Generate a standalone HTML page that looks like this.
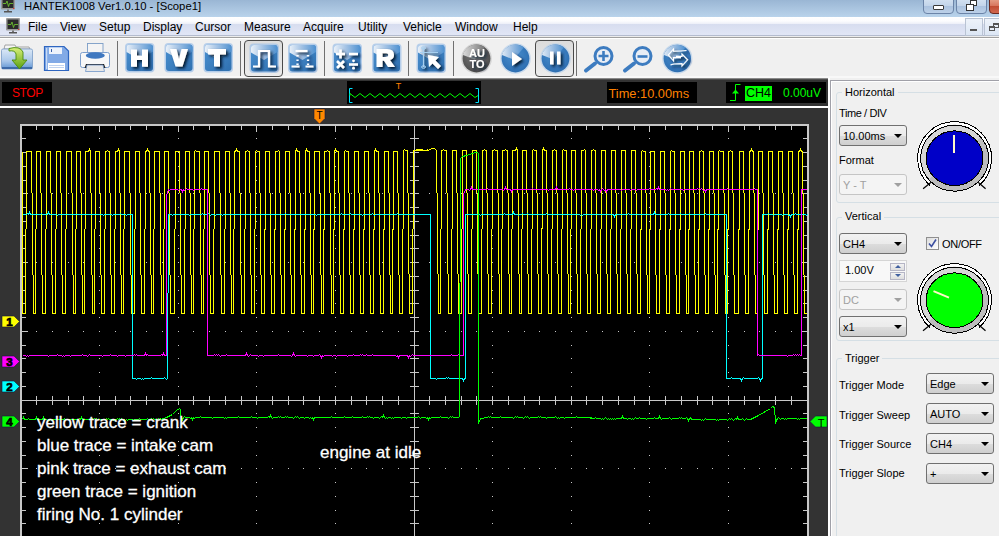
<!DOCTYPE html>
<html><head><meta charset="utf-8">
<style>
*{margin:0;padding:0;box-sizing:border-box}
html,body{width:999px;height:536px;overflow:hidden;background:#f0f0f0;font-family:"Liberation Sans",sans-serif;font-size:12px;color:#000}
.a{position:absolute}
#title{left:0;top:0;width:999px;height:17px;background:linear-gradient(#9ab6d4,#b9d3eb)}
#menu{left:0;top:17px;width:999px;height:18px;background:linear-gradient(#ffffff 0px,#fcfcfe 4px,#eceff8 7px,#d7ddef 7px,#e1e6f6 18px)}
#menuline{left:0;top:35px;width:999px;height:4px;background:linear-gradient(#b4bccf 0px,#b4bccf 1px,#ececec 1px,#ececec 2px,#a0a0a0 2px,#a0a0a0 3px,#fff 3px)}
#tb{left:0;top:39px;width:999px;height:39px;background:linear-gradient(#f0f0f0 37px,#f8f8f8 37px)}
.mi{top:20px;font-size:12px;color:#000;white-space:nowrap;line-height:14px}
#status{left:0;top:78px;width:828px;height:28px;background:linear-gradient(#8a8a8a 0px,#8a8a8a 1px,#4c4c4c 1px,#4c4c4c 2px,#333 2px)}
#wline{left:0;top:106px;width:828px;height:2px;background:#fff}
#scope{left:0;top:108px;width:828px;height:428px;background:#333}
#panel{left:830px;top:80px;width:169px;height:456px;background:#f0f0f0;border-left:1px solid #a0a0a0;border-top:1px solid #a0a0a0}
.lbl{font-size:11px;white-space:nowrap;line-height:12px;color:#000}
.gb{border:1px solid #d5dfe5;border-radius:3px}
.gbt{background:#f0f0f0;padding:0 3px;font-size:11px;line-height:12px}
.cb{width:68px;height:21px;border:1px solid #707070;border-radius:3px;background:linear-gradient(#f2f2f2 0%,#ebebeb 50%,#dddddd 51%,#cfcfcf 100%)}
.cb span{position:absolute;left:3px;top:4px;font-size:11px;line-height:12px}
.cb i{position:absolute;right:4px;top:8px;width:0;height:0;border-left:4px solid transparent;border-right:4px solid transparent;border-top:4px solid #000}
.cbd{border-color:#c5c5c5;background:#f4f4f4}
.cbd span{color:#a0a0a0}
.cbd i{border-top-color:#a0a0a0}
</style></head><body>
<div id="title" class="a"></div>
<div id="menu" class="a"></div>
<div id="menuline" class="a"></div>
<div id="tb" class="a"></div>
<div id="status" class="a"></div>
<div id="wline" class="a"></div>
<div id="scope" class="a"></div>
<div id="panel" class="a"></div>

<!-- title text -->
<div class="a" style="left:24px;top:0px;font-size:11.3px;line-height:13px;color:#000;white-space:nowrap">HANTEK1008 Ver1.0.10 - [Scope1]</div>
<!--ICONS--><svg class="a" style="left:0;top:0" width="30" height="40">
<g><rect x="1" y="-3" width="14" height="12.5" rx="1" fill="#9a9a9a"/><rect x="2.5" y="-2" width="11" height="10" fill="#2a2a2a"/><path d="M3 3.5 H6 L7 1 L8.5 6.5 L9.5 3.5 H13" fill="none" stroke="#6cc030" stroke-width="0.9"/><rect x="13" y="8" width="1.2" height="1" fill="#e03030"/><rect x="7" y="9.5" width="2" height="1.5" fill="#777"/><rect x="4" y="11" width="8" height="1.5" fill="#555"/></g>
<g><rect x="6" y="18" width="14" height="12.5" rx="1" fill="#9a9a9a"/><rect x="7.5" y="19.5" width="11" height="9.5" fill="#2a2a2a"/><path d="M8 24.5 H11 L12 22 L13.5 27.5 L14.5 24.5 H18" fill="none" stroke="#6cc030" stroke-width="0.9"/><rect x="18" y="29" width="1.2" height="1" fill="#e03030"/><rect x="12" y="30.5" width="2" height="1.5" fill="#777"/><rect x="9" y="32" width="8" height="1.5" fill="#555"/></g>
</svg>
<!-- window buttons -->
<div class="a" style="left:923px;top:-3px;width:31px;height:17px;border:1px solid #6b84a8;border-radius:0 0 4px 4px;background:linear-gradient(#d6e3f2 0%,#c3d5ea 50%,#a9c1de 51%,#bcd0e8 100%)"></div>
<div class="a" style="left:933px;top:5px;width:11px;height:5px;border:1px solid #3a3a3a;border-radius:1px;background:#fff"></div>
<div class="a" style="left:956px;top:-3px;width:31px;height:17px;border:1px solid #6b84a8;border-radius:0 0 4px 4px;background:linear-gradient(#d6e3f2 0%,#c3d5ea 50%,#a9c1de 51%,#bcd0e8 100%)"></div>
<div class="a" style="left:970px;top:0px;width:7px;height:6px;border:1.5px solid #333;background:#fff"></div>
<div class="a" style="left:966px;top:4px;width:8px;height:7px;border:1.5px solid #333;background:#fff"></div>
<div class="a" style="left:989px;top:-3px;width:20px;height:17px;border:1px solid #6a2a20;border-radius:0 0 4px 4px;background:linear-gradient(#e8a890 0%,#d87860 50%,#c04a30 51%,#d06850 100%)"></div>
<!-- MDI buttons -->
<div class="a" style="left:965px;top:18px;width:18px;height:18px;border:1px solid #b9c3d3;background:linear-gradient(#eef3fa,#dce6f4)"></div>
<div class="a" style="left:970px;top:29px;width:7px;height:2px;background:#555"></div>
<div class="a" style="left:984px;top:18px;width:18px;height:18px;border:1px solid #b9c3d3;background:linear-gradient(#eef3fa,#dce6f4)"></div>
<div class="a" style="left:993px;top:23px;width:6px;height:5px;border:1.2px solid #555;border-top-width:2px"></div>
<div class="a" style="left:989px;top:26px;width:6px;height:5px;border:1.2px solid #555;border-top-width:2px;background:#e6ecf6"></div>
<!--/ICONS-->
<!-- menu items -->
<div class="a mi" style="left:28px">File</div>
<div class="a mi" style="left:60px">View</div>
<div class="a mi" style="left:99px">Setup</div>
<div class="a mi" style="left:143px">Display</div>
<div class="a mi" style="left:195px">Cursor</div>
<div class="a mi" style="left:244px">Measure</div>
<div class="a mi" style="left:303px">Acquire</div>
<div class="a mi" style="left:358px">Utility</div>
<div class="a mi" style="left:403px">Vehicle</div>
<div class="a mi" style="left:455px">Window</div>
<div class="a mi" style="left:513px">Help</div>

<svg class="a" style="left:0;top:0" width="999" height="80"><defs>
<linearGradient id="tmain" x1="0" y1="0" x2="1" y2="1"><stop offset="0" stop-color="#4a90d0"/><stop offset="1" stop-color="#2f70b0"/></linearGradient>
<linearGradient id="thl" x1="0" y1="0" x2="1" y2="0"><stop offset="0" stop-color="#f2f6fb"/><stop offset="0.45" stop-color="#a9c6e6"/><stop offset="1" stop-color="#4f92d2"/></linearGradient>
<radialGradient id="cmain" cx="0.45" cy="0.4" r="0.6"><stop offset="0" stop-color="#4a90d0"/><stop offset="1" stop-color="#2e6fb2"/></radialGradient>
<radialGradient id="gmain" cx="0.45" cy="0.4" r="0.6"><stop offset="0" stop-color="#7a7a7a"/><stop offset="1" stop-color="#4e4e4e"/></radialGradient>
<linearGradient id="ghl" x1="0" y1="0" x2="1" y2="0"><stop offset="0" stop-color="#e8e8e8"/><stop offset="1" stop-color="#7a7a7a"/></linearGradient>
<linearGradient id="fold" x1="0" y1="0" x2="0" y2="1"><stop offset="0" stop-color="#dbe8f6"/><stop offset="0.6" stop-color="#a9c7ea"/><stop offset="1" stop-color="#5e93d2"/></linearGradient>
<linearGradient id="arr" x1="0" y1="0" x2="0" y2="1"><stop offset="0" stop-color="#d9f07a"/><stop offset="1" stop-color="#5aa010"/></linearGradient>
<linearGradient id="press" x1="0" y1="0" x2="0" y2="1"><stop offset="0" stop-color="#dcdcdc"/><stop offset="1" stop-color="#ececec"/></linearGradient>
<filter id="sh" x="-30%" y="-30%" width="170%" height="170%"><feGaussianBlur in="SourceAlpha" stdDeviation="1.4"/><feOffset dx="2" dy="2.2" result="b"/><feFlood flood-color="#041830" flood-opacity="1"/><feComposite in2="b" operator="in"/><feMerge><feMergeNode/><feMergeNode in="SourceGraphic"/></feMerge></filter>
</defs><g><path d="M4 49 L5 45 H15 L16 47 H29 L30 49 Z" fill="#f4f4f4" stroke="#909090" stroke-width="0.8"/><rect x="1.5" y="49" width="31" height="20" rx="1.5" fill="url(#fold)" stroke="#7a9cc6" stroke-width="0.8"/><rect x="2" y="67" width="30" height="2" fill="#3d6aa8"/><path d="M9 48.5 Q20 45.5 23 52 V60 H27 L19.5 69 L12 60 H16 V54 Q15 50 9 51 Z" fill="url(#arr)" stroke="#4a8a10" stroke-width="0.9"/></g><g><path d="M44.5 46.5 H64 L68.5 51 V70.5 H44.5 Z" fill="#82aae6" stroke="#2f66c0" stroke-width="1.2"/><rect x="49" y="47.5" width="13" height="6.5" fill="#eef3fb"/><rect x="51" y="49" width="1" height="3" fill="#3a5fa8"/><rect x="48" y="63" width="17" height="7" fill="#fff"/><path d="M49 65.5 H64 M49 67.5 H64" stroke="#b0c8ec" stroke-width="0.8"/><rect x="46" y="48" width="1.2" height="21" fill="#c9dbf5"/></g><g><rect x="87.5" y="43.5" width="15.5" height="10" fill="#f4f4f4" stroke="#7a9cc6" stroke-width="0.9"/><rect x="80.5" y="52.5" width="29" height="15" rx="2" fill="#f8f8f8" stroke="#6f95c8" stroke-width="0.9"/><ellipse cx="95.3" cy="55.5" rx="9.5" ry="3.2" fill="#3f78c0"/><path d="M86 64 H104 L105.5 68 H84.5 Z" fill="#222"/><path d="M87 65 H103 L104.5 71.5 H85.5 Z" fill="#e8e8e8" stroke="#6f95c8" stroke-width="0.8"/></g><rect x="117" y="41" width="1" height="35" fill="#707070"/><rect x="240" y="41" width="1" height="35" fill="#707070"/><rect x="324" y="41" width="1" height="35" fill="#707070"/><rect x="408" y="41" width="1" height="35" fill="#707070"/><rect x="453" y="41" width="1" height="35" fill="#707070"/><rect x="576" y="41" width="1" height="35" fill="#707070"/><rect x="244.5" y="40.5" width="38.0" height="36" rx="3.5" fill="url(#press)" stroke="#4a4a4a" stroke-width="1"/><rect x="535.5" y="40.5" width="38.0" height="36" rx="3.5" fill="url(#press)" stroke="#4a4a4a" stroke-width="1"/><g transform="translate(124.5,42.5)"><rect x="0.5" y="0.5" width="29.5" height="29.5" rx="4" fill="#a8c6e8" opacity="0.8"/><rect x="2" y="2" width="26.5" height="26.5" rx="3" fill="url(#tmain)"/><path d="M2 5 Q2 2 5 2 H25.5 Q28.5 2 28.5 5 V9 L15 17 L2 9.5 Z" fill="url(#thl)" opacity="0.95"/><g filter="url(#sh)"><path d="M6.5 7 H12.5 V13.3 H17.5 V7 H23.5 V24.3 H17.5 V17.6 H12.5 V24.3 H6.5 Z" fill="#fff"/></g></g><g transform="translate(164,42.5)"><rect x="0.5" y="0.5" width="29.5" height="29.5" rx="4" fill="#a8c6e8" opacity="0.8"/><rect x="2" y="2" width="26.5" height="26.5" rx="3" fill="url(#tmain)"/><path d="M2 5 Q2 2 5 2 H25.5 Q28.5 2 28.5 5 V9 L15 17 L2 9.5 Z" fill="url(#thl)" opacity="0.95"/><g filter="url(#sh)"><path d="M6 6.5 H12.5 L15 16.5 L17.5 6.5 H24 L18.5 24 H11.5 Z" fill="#fff"/></g></g><g transform="translate(203,42.5)"><rect x="0.5" y="0.5" width="29.5" height="29.5" rx="4" fill="#a8c6e8" opacity="0.8"/><rect x="2" y="2" width="26.5" height="26.5" rx="3" fill="url(#tmain)"/><path d="M2 5 Q2 2 5 2 H25.5 Q28.5 2 28.5 5 V9 L15 17 L2 9.5 Z" fill="url(#thl)" opacity="0.95"/><g filter="url(#sh)"><path d="M5 6.5 H23 V12 H17 V24 H11 V12 H5 Z" fill="#fff"/></g></g><g transform="translate(249,43)"><rect x="0.5" y="0.5" width="29.5" height="29.5" rx="4" fill="#a8c6e8" opacity="0.8"/><rect x="2" y="2" width="26.5" height="26.5" rx="3" fill="url(#tmain)"/><path d="M2 5 Q2 2 5 2 H25.5 Q28.5 2 28.5 5 V9 L15 17 L2 9.5 Z" fill="url(#thl)" opacity="0.95"/><g filter="url(#sh)"><path d="M4 23.5 H10 V8 H20 V23.5 H27" fill="none" stroke="#fff" stroke-width="2.2"/></g></g><g transform="translate(287.5,43)"><rect x="0.5" y="0.5" width="29.5" height="29.5" rx="4" fill="#a8c6e8" opacity="0.8"/><rect x="2" y="2" width="26.5" height="26.5" rx="3" fill="url(#tmain)"/><path d="M2 5 Q2 2 5 2 H25.5 Q28.5 2 28.5 5 V9 L15 17 L2 9.5 Z" fill="url(#thl)" opacity="0.95"/><g filter="url(#sh)"><path d="M8 8 H20" stroke="#fff" stroke-width="2.2"/><path d="M10 12 V13.5 M10 16.5 V18 M10 20.5 V22 M20.5 12 V13.5 M20.5 16.5 V18 M20.5 20.5 V22" stroke="#fff" stroke-width="2.2"/><path d="M4 23.5 H12 M18 23.5 H26" stroke="#fff" stroke-width="2.2"/></g></g><g transform="translate(332,43)"><rect x="0.5" y="0.5" width="29.5" height="29.5" rx="4" fill="#a8c6e8" opacity="0.8"/><rect x="2" y="2" width="26.5" height="26.5" rx="3" fill="url(#tmain)"/><path d="M2 5 Q2 2 5 2 H25.5 Q28.5 2 28.5 5 V9 L15 17 L2 9.5 Z" fill="url(#thl)" opacity="0.95"/><g filter="url(#sh)"><path d="M4 11 H13 M8.5 6.5 V15.5 M17 11 H26" stroke="#fff" stroke-width="2.6"/><path d="M5 18 L12 25 M12 18 L5 25 M17 21.5 H26" stroke="#fff" stroke-width="2.6"/><circle cx="21.5" cy="17.8" r="1.4" fill="#fff"/><circle cx="21.5" cy="25.2" r="1.4" fill="#fff"/></g></g><g transform="translate(371.5,43)"><rect x="0.5" y="0.5" width="29.5" height="29.5" rx="4" fill="#a8c6e8" opacity="0.8"/><rect x="2" y="2" width="26.5" height="26.5" rx="3" fill="url(#tmain)"/><path d="M2 5 Q2 2 5 2 H25.5 Q28.5 2 28.5 5 V9 L15 17 L2 9.5 Z" fill="url(#thl)" opacity="0.95"/><g filter="url(#sh)"><path fill-rule="evenodd" d="M5 6 H15.5 Q22.5 6 22.5 12 Q22.5 16 18.5 17 L23.5 24 H16.5 L12.5 17.8 H11 V24 H5 Z M11 10.3 H14.8 Q16.8 10.3 16.8 12.1 Q16.8 14 14.8 14 H11 Z" fill="#fff"/></g></g><g transform="translate(416,43)"><rect x="0.5" y="0.5" width="29.5" height="29.5" rx="4" fill="#a8c6e8" opacity="0.8"/><rect x="2" y="2" width="26.5" height="26.5" rx="3" fill="url(#tmain)"/><path d="M2 5 Q2 2 5 2 H25.5 Q28.5 2 28.5 5 V9 L15 17 L2 9.5 Z" fill="url(#thl)" opacity="0.95"/><g filter="url(#sh)"><path d="M7.5 5 V24 M4 9.5 H22" stroke="#a8d0f0" stroke-width="1.2" fill="none"/><ellipse cx="7.5" cy="5" rx="2" ry="1.2" fill="none" stroke="#a8d0f0"/><ellipse cx="7.5" cy="24" rx="2" ry="1.2" fill="none" stroke="#a8d0f0"/><path d="M12 12 L23 14 L19.5 17.5 L25 23 L22 26 L16.5 20.5 L13 24 Z" fill="#fff"/></g></g><circle cx="476.5" cy="58.5" r="15.3" fill="#c8c8c8" opacity="0.7"/><circle cx="476.5" cy="58.5" r="13.9" fill="url(#gmain)"/><path d="M463.02 55.02 A13.9 13.9 0 0 1 484.84 47.38 L474.5 59.5 Z" fill="url(#ghl)" opacity="0.9"/><g filter="url(#sh)"><text x="477" y="57" font-family="Liberation Sans" font-weight="bold" font-size="11" fill="#fff" text-anchor="middle">AU</text><text x="477" y="67.5" font-family="Liberation Sans" font-weight="bold" font-size="11" fill="#fff" text-anchor="middle">TO</text></g><circle cx="515.5" cy="58.5" r="15.3" fill="#b8d0ea" opacity="0.7"/><circle cx="515.5" cy="58.5" r="13.9" fill="url(#cmain)"/><path d="M502.02 55.02 A13.9 13.9 0 0 1 523.84 47.38 L513.5 59.5 Z" fill="url(#thl)" opacity="0.9"/><g filter="url(#sh)"><path d="M512 52 L522 59 L512 66 Z" fill="#fff"/></g><circle cx="555.5" cy="58.5" r="15.3" fill="#b8d0ea" opacity="0.7"/><circle cx="555.5" cy="58.5" r="13.9" fill="url(#cmain)"/><path d="M542.02 55.02 A13.9 13.9 0 0 1 563.84 47.38 L553.5 59.5 Z" fill="url(#thl)" opacity="0.9"/><g filter="url(#sh)"><rect x="550" y="51.5" width="3.5" height="13" fill="#fff"/><rect x="557" y="51.5" width="3.5" height="13" fill="#fff"/></g><path d="M586.0 70.5 L595.0 63.5" stroke="#3d7cc0" stroke-width="4" stroke-linecap="round"/><circle cx="603.5" cy="56" r="8.5" fill="#e9eef5" stroke="#3d7cc0" stroke-width="3"/><path d="M598.5 56 H608.5 M603.5 51 V61" stroke="#3d7cc0" stroke-width="2.6"/><path d="M625.0 70.5 L634.0 63.5" stroke="#3d7cc0" stroke-width="4" stroke-linecap="round"/><circle cx="642.5" cy="56" r="8.5" fill="#e9eef5" stroke="#3d7cc0" stroke-width="3"/><path d="M637.5 56.5 H647.5" stroke="#3d7cc0" stroke-width="2.6"/><circle cx="677.3" cy="58.5" r="15.100000000000001" fill="#b8d0ea" opacity="0.7"/><circle cx="677.3" cy="58.5" r="13.700000000000001" fill="url(#cmain)"/><path d="M664.01 55.08 A13.700000000000001 13.700000000000001 0 0 1 685.52 47.54 L675.3 59.5 Z" fill="url(#thl)" opacity="0.9"/><g filter="url(#sh)"><path d="M686.5 50.5 Q681 51.2 673.5 51.2 V49 L668.3 55 L673.5 60.8 V57.6 H681" fill="none" stroke="#fff" stroke-width="1.1"/><path d="M670.5 65.2 Q672 63.6 682 63.6 V65.8 L687.6 59.8 L682 54 V56.4 H676" fill="none" stroke="#fff" stroke-width="1.1"/></g></svg>
<!-- status boxes -->
<div class="a" style="left:2px;top:82px;width:50px;height:21px;background:#000"></div>
<div class="a" style="left:12px;top:87px;font-size:12px;line-height:12px;letter-spacing:-0.4px;color:#ff0000">STOP</div>
<div class="a" style="left:347px;top:81px;width:134px;height:23px;background:#000"></div>
<div class="a" style="left:607px;top:82px;width:90px;height:21px;background:#000"></div>
<div class="a" style="left:608.5px;top:87px;font-size:12.8px;line-height:13px;color:#ff8000;white-space:nowrap">Time:10.00ms</div>
<div class="a" style="left:726px;top:82px;width:100px;height:21px;background:#000"></div>
<div class="a" style="left:745px;top:86px;width:27px;height:15px;background:#00ff00"></div>
<div class="a" style="left:746px;top:87px;font-size:12.5px;line-height:13px;color:#000">CH4</div>
<div class="a" style="left:783px;top:87px;font-size:12px;line-height:13px;color:#00ff00">0.00uV</div>


<!-- right panel -->
<div class="a" style="left:828px;top:78px;width:2px;height:458px;background:#fff"></div>
<div class="a" style="left:830px;top:80px;width:169px;height:456px;background:#f0f0f0;border-left:1px solid #a0a0a8;border-top:1px solid #a0a0a8;box-shadow:inset 1px 1px 0 #fff"></div>
<!-- Horizontal group -->
<div class="a gb" style="left:836px;top:92px;width:170px;height:111px"></div>
<div class="a gbt" style="left:842px;top:86px">Horizontal</div>
<div class="a lbl" style="left:839px;top:107px;letter-spacing:-0.4px">Time / DIV</div>
<div class="a cb" style="left:839px;top:125px"><span>10.00ms</span><i></i></div>
<div class="a lbl" style="left:839px;top:154px">Format</div>
<div class="a cb cbd" style="left:839px;top:174px"><span>Y - T</span><i></i></div>
<!-- Vertical group -->
<div class="a gb" style="left:836px;top:217px;width:170px;height:124px"></div>
<div class="a gbt" style="left:842px;top:210px">Vertical</div>
<div class="a cb" style="left:839px;top:233px"><span>CH4</span><i></i></div>
<div class="a" style="left:839px;top:260px;width:68px;height:22px;border:1px solid #d5d5d5;background:#f8f8f8"></div>
<div class="a lbl" style="left:845px;top:264px">1.00V</div>
<div class="a" style="left:890px;top:263px;width:15px;height:8px;border:1px solid #b5b5c5;background:linear-gradient(#f2f2f2,#dedede)"></div>
<div class="a" style="left:890px;top:272px;width:15px;height:8px;border:1px solid #b5b5c5;background:linear-gradient(#f2f2f2,#dedede)"></div>
<div class="a" style="left:894.5px;top:265px;width:0;height:0;border-left:3px solid transparent;border-right:3px solid transparent;border-bottom:3px solid #4060a0"></div>
<div class="a" style="left:894.5px;top:274px;width:0;height:0;border-left:3px solid transparent;border-right:3px solid transparent;border-top:3px solid #4060a0"></div>
<div class="a cb cbd" style="left:839px;top:289px"><span>DC</span><i></i></div>
<div class="a cb" style="left:839px;top:316px"><span>x1</span><i></i></div>
<div class="a" style="left:926px;top:237px;width:13px;height:13px;border:1px solid #8f8f8f;background:linear-gradient(135deg,#dcdcdc,#fff)"></div>
<svg class="a" style="left:926px;top:237px" width="13" height="13"><path d="M3 6.5 L5.5 9.5 L10 2.5" fill="none" stroke="#3c4fa0" stroke-width="1.6"/></svg>
<div class="a lbl" style="left:942px;top:238px;letter-spacing:-0.3px">ON/OFF</div>
<!-- Trigger group -->
<div class="a gb" style="left:836px;top:358px;width:170px;height:200px"></div>
<div class="a gbt" style="left:842px;top:352px">Trigger</div>
<div class="a lbl" style="left:839px;top:379px">Trigger Mode</div>
<div class="a cb" style="left:926px;top:373px"><span>Edge</span><i></i></div>
<div class="a lbl" style="left:839px;top:409px">Trigger Sweep</div>
<div class="a cb" style="left:926px;top:403px"><span>AUTO</span><i></i></div>
<div class="a lbl" style="left:839px;top:438px">Trigger Source</div>
<div class="a cb" style="left:926px;top:433px"><span>CH4</span><i></i></div>
<div class="a lbl" style="left:839px;top:467px">Trigger Slope</div>
<div class="a cb" style="left:926px;top:463px"><span>+</span><i></i></div>
<!--K1--><svg class="a" style="left:0;top:0" width="999" height="536"><g shape-rendering="crispEdges"><path d="M930.78 184.21 A35.6 35.0 0 1 1 978.42 184.21" fill="none" stroke="#fff" stroke-width="2.4"/><path d="M929.84 185.40 A37.0 36.6 0 1 1 979.36 185.40" fill="none" stroke="#000" stroke-width="1.0"/><ellipse cx="954.6" cy="158.2" rx="34" ry="33" fill="#bdbdbd" stroke="#000" stroke-width="1"/><path d="M954.6 158.2 L929.01 179.03 A33.4 32.4 0 0 1 980.19 137.37 Z" fill="#d6d6d6"/><ellipse cx="954.6" cy="158.2" rx="28.4" ry="27.3" fill="#0000c8" stroke="#000" stroke-width="1"/></g><path d="M923.1 188.7 L931.1 182.2" stroke="#000" stroke-width="1.2"/><path d="M985.6 188.7 L978.1 182.2" stroke="#000" stroke-width="1.2"/><rect x="953" y="135" width="2" height="18" fill="#fff8c8"/><g shape-rendering="crispEdges"><path d="M930.68 326.21 A35.6 35.0 0 1 1 978.32 326.21" fill="none" stroke="#fff" stroke-width="2.4"/><path d="M929.74 327.40 A37.0 36.6 0 1 1 979.26 327.40" fill="none" stroke="#000" stroke-width="1.0"/><ellipse cx="954.5" cy="300.2" rx="34" ry="33" fill="#bdbdbd" stroke="#000" stroke-width="1"/><path d="M954.5 300.2 L928.91 321.03 A33.4 32.4 0 0 1 980.09 279.37 Z" fill="#d6d6d6"/><ellipse cx="954.5" cy="300.2" rx="28.4" ry="27.3" fill="#00ff00" stroke="#000" stroke-width="1"/></g><path d="M923.0 330.7 L931.0 324.2" stroke="#000" stroke-width="1.2"/><path d="M985.5 330.7 L978.0 324.2" stroke="#000" stroke-width="1.2"/><path d="M933.5 291.2 L949 297.6" stroke="#fff8c8" stroke-width="2"/></svg><!--K2-->
<svg class="a" style="left:0;top:0" width="999" height="536" viewBox="0 0 999 536"><g shape-rendering="crispEdges"><rect x="22" y="126" width="785" height="410" fill="#000"/><rect x="20" y="124" width="789" height="2" fill="#c8c8c8"/><rect x="20" y="124" width="2" height="412" fill="#c8c8c8"/><rect x="807" y="124" width="2" height="412" fill="#c8c8c8"/><rect x="36" y="126" width="1" height="4" fill="#c8c8c8"/><rect x="52" y="126" width="1" height="4" fill="#c8c8c8"/><rect x="68" y="126" width="1" height="4" fill="#c8c8c8"/><rect x="83" y="126" width="1" height="4" fill="#c8c8c8"/><rect x="99" y="126" width="1" height="6" fill="#c8c8c8"/><rect x="115" y="126" width="1" height="4" fill="#c8c8c8"/><rect x="130" y="126" width="1" height="4" fill="#c8c8c8"/><rect x="146" y="126" width="1" height="4" fill="#c8c8c8"/><rect x="162" y="126" width="1" height="4" fill="#c8c8c8"/><rect x="178" y="126" width="1" height="6" fill="#c8c8c8"/><rect x="193" y="126" width="1" height="4" fill="#c8c8c8"/><rect x="209" y="126" width="1" height="4" fill="#c8c8c8"/><rect x="225" y="126" width="1" height="4" fill="#c8c8c8"/><rect x="241" y="126" width="1" height="4" fill="#c8c8c8"/><rect x="256" y="126" width="1" height="6" fill="#c8c8c8"/><rect x="272" y="126" width="1" height="4" fill="#c8c8c8"/><rect x="288" y="126" width="1" height="4" fill="#c8c8c8"/><rect x="303" y="126" width="1" height="4" fill="#c8c8c8"/><rect x="319" y="126" width="1" height="4" fill="#c8c8c8"/><rect x="335" y="126" width="1" height="6" fill="#c8c8c8"/><rect x="351" y="126" width="1" height="4" fill="#c8c8c8"/><rect x="366" y="126" width="1" height="4" fill="#c8c8c8"/><rect x="382" y="126" width="1" height="4" fill="#c8c8c8"/><rect x="398" y="126" width="1" height="4" fill="#c8c8c8"/><rect x="414" y="126" width="1" height="6" fill="#c8c8c8"/><rect x="429" y="126" width="1" height="4" fill="#c8c8c8"/><rect x="445" y="126" width="1" height="4" fill="#c8c8c8"/><rect x="461" y="126" width="1" height="4" fill="#c8c8c8"/><rect x="476" y="126" width="1" height="4" fill="#c8c8c8"/><rect x="492" y="126" width="1" height="6" fill="#c8c8c8"/><rect x="508" y="126" width="1" height="4" fill="#c8c8c8"/><rect x="524" y="126" width="1" height="4" fill="#c8c8c8"/><rect x="539" y="126" width="1" height="4" fill="#c8c8c8"/><rect x="555" y="126" width="1" height="4" fill="#c8c8c8"/><rect x="571" y="126" width="1" height="6" fill="#c8c8c8"/><rect x="586" y="126" width="1" height="4" fill="#c8c8c8"/><rect x="602" y="126" width="1" height="4" fill="#c8c8c8"/><rect x="618" y="126" width="1" height="4" fill="#c8c8c8"/><rect x="634" y="126" width="1" height="4" fill="#c8c8c8"/><rect x="649" y="126" width="1" height="6" fill="#c8c8c8"/><rect x="665" y="126" width="1" height="4" fill="#c8c8c8"/><rect x="681" y="126" width="1" height="4" fill="#c8c8c8"/><rect x="697" y="126" width="1" height="4" fill="#c8c8c8"/><rect x="712" y="126" width="1" height="4" fill="#c8c8c8"/><rect x="728" y="126" width="1" height="6" fill="#c8c8c8"/><rect x="744" y="126" width="1" height="4" fill="#c8c8c8"/><rect x="759" y="126" width="1" height="4" fill="#c8c8c8"/><rect x="775" y="126" width="1" height="4" fill="#c8c8c8"/><rect x="791" y="126" width="1" height="4" fill="#c8c8c8"/><rect x="22" y="138" width="4" height="1" fill="#c8c8c8"/><rect x="803" y="138" width="4" height="1" fill="#c8c8c8"/><rect x="22" y="152" width="4" height="1" fill="#c8c8c8"/><rect x="803" y="152" width="4" height="1" fill="#c8c8c8"/><rect x="22" y="166" width="4" height="1" fill="#c8c8c8"/><rect x="803" y="166" width="4" height="1" fill="#c8c8c8"/><rect x="22" y="180" width="4" height="1" fill="#c8c8c8"/><rect x="803" y="180" width="4" height="1" fill="#c8c8c8"/><rect x="22" y="193" width="6" height="1" fill="#c8c8c8"/><rect x="801" y="193" width="6" height="1" fill="#c8c8c8"/><rect x="22" y="207" width="4" height="1" fill="#c8c8c8"/><rect x="803" y="207" width="4" height="1" fill="#c8c8c8"/><rect x="22" y="221" width="4" height="1" fill="#c8c8c8"/><rect x="803" y="221" width="4" height="1" fill="#c8c8c8"/><rect x="22" y="235" width="4" height="1" fill="#c8c8c8"/><rect x="803" y="235" width="4" height="1" fill="#c8c8c8"/><rect x="22" y="248" width="4" height="1" fill="#c8c8c8"/><rect x="803" y="248" width="4" height="1" fill="#c8c8c8"/><rect x="22" y="262" width="6" height="1" fill="#c8c8c8"/><rect x="801" y="262" width="6" height="1" fill="#c8c8c8"/><rect x="22" y="276" width="4" height="1" fill="#c8c8c8"/><rect x="803" y="276" width="4" height="1" fill="#c8c8c8"/><rect x="22" y="290" width="4" height="1" fill="#c8c8c8"/><rect x="803" y="290" width="4" height="1" fill="#c8c8c8"/><rect x="22" y="303" width="4" height="1" fill="#c8c8c8"/><rect x="803" y="303" width="4" height="1" fill="#c8c8c8"/><rect x="22" y="317" width="4" height="1" fill="#c8c8c8"/><rect x="803" y="317" width="4" height="1" fill="#c8c8c8"/><rect x="22" y="331" width="6" height="1" fill="#c8c8c8"/><rect x="801" y="331" width="6" height="1" fill="#c8c8c8"/><rect x="22" y="345" width="4" height="1" fill="#c8c8c8"/><rect x="803" y="345" width="4" height="1" fill="#c8c8c8"/><rect x="22" y="358" width="4" height="1" fill="#c8c8c8"/><rect x="803" y="358" width="4" height="1" fill="#c8c8c8"/><rect x="22" y="372" width="4" height="1" fill="#c8c8c8"/><rect x="803" y="372" width="4" height="1" fill="#c8c8c8"/><rect x="22" y="386" width="4" height="1" fill="#c8c8c8"/><rect x="803" y="386" width="4" height="1" fill="#c8c8c8"/><rect x="22" y="400" width="6" height="1" fill="#c8c8c8"/><rect x="801" y="400" width="6" height="1" fill="#c8c8c8"/><rect x="22" y="413" width="4" height="1" fill="#c8c8c8"/><rect x="803" y="413" width="4" height="1" fill="#c8c8c8"/><rect x="22" y="427" width="4" height="1" fill="#c8c8c8"/><rect x="803" y="427" width="4" height="1" fill="#c8c8c8"/><rect x="22" y="441" width="4" height="1" fill="#c8c8c8"/><rect x="803" y="441" width="4" height="1" fill="#c8c8c8"/><rect x="22" y="455" width="4" height="1" fill="#c8c8c8"/><rect x="803" y="455" width="4" height="1" fill="#c8c8c8"/><rect x="22" y="468" width="6" height="1" fill="#c8c8c8"/><rect x="801" y="468" width="6" height="1" fill="#c8c8c8"/><rect x="22" y="482" width="4" height="1" fill="#c8c8c8"/><rect x="803" y="482" width="4" height="1" fill="#c8c8c8"/><rect x="22" y="496" width="4" height="1" fill="#c8c8c8"/><rect x="803" y="496" width="4" height="1" fill="#c8c8c8"/><rect x="22" y="510" width="4" height="1" fill="#c8c8c8"/><rect x="803" y="510" width="4" height="1" fill="#c8c8c8"/><rect x="22" y="523" width="4" height="1" fill="#c8c8c8"/><rect x="803" y="523" width="4" height="1" fill="#c8c8c8"/><rect x="414" y="126" width="1" height="410" fill="#c8c8c8"/><rect x="22" y="400" width="785" height="1" fill="#c8c8c8"/><rect x="36" y="396" width="1" height="9" fill="#c8c8c8"/><rect x="52" y="396" width="1" height="9" fill="#c8c8c8"/><rect x="68" y="396" width="1" height="9" fill="#c8c8c8"/><rect x="83" y="396" width="1" height="9" fill="#c8c8c8"/><rect x="99" y="396" width="1" height="9" fill="#c8c8c8"/><rect x="115" y="396" width="1" height="9" fill="#c8c8c8"/><rect x="130" y="396" width="1" height="9" fill="#c8c8c8"/><rect x="146" y="396" width="1" height="9" fill="#c8c8c8"/><rect x="162" y="396" width="1" height="9" fill="#c8c8c8"/><rect x="178" y="396" width="1" height="9" fill="#c8c8c8"/><rect x="193" y="396" width="1" height="9" fill="#c8c8c8"/><rect x="209" y="396" width="1" height="9" fill="#c8c8c8"/><rect x="225" y="396" width="1" height="9" fill="#c8c8c8"/><rect x="241" y="396" width="1" height="9" fill="#c8c8c8"/><rect x="256" y="396" width="1" height="9" fill="#c8c8c8"/><rect x="272" y="396" width="1" height="9" fill="#c8c8c8"/><rect x="288" y="396" width="1" height="9" fill="#c8c8c8"/><rect x="303" y="396" width="1" height="9" fill="#c8c8c8"/><rect x="319" y="396" width="1" height="9" fill="#c8c8c8"/><rect x="335" y="396" width="1" height="9" fill="#c8c8c8"/><rect x="351" y="396" width="1" height="9" fill="#c8c8c8"/><rect x="366" y="396" width="1" height="9" fill="#c8c8c8"/><rect x="382" y="396" width="1" height="9" fill="#c8c8c8"/><rect x="398" y="396" width="1" height="9" fill="#c8c8c8"/><rect x="429" y="396" width="1" height="9" fill="#c8c8c8"/><rect x="445" y="396" width="1" height="9" fill="#c8c8c8"/><rect x="461" y="396" width="1" height="9" fill="#c8c8c8"/><rect x="476" y="396" width="1" height="9" fill="#c8c8c8"/><rect x="492" y="396" width="1" height="9" fill="#c8c8c8"/><rect x="508" y="396" width="1" height="9" fill="#c8c8c8"/><rect x="524" y="396" width="1" height="9" fill="#c8c8c8"/><rect x="539" y="396" width="1" height="9" fill="#c8c8c8"/><rect x="555" y="396" width="1" height="9" fill="#c8c8c8"/><rect x="571" y="396" width="1" height="9" fill="#c8c8c8"/><rect x="586" y="396" width="1" height="9" fill="#c8c8c8"/><rect x="602" y="396" width="1" height="9" fill="#c8c8c8"/><rect x="618" y="396" width="1" height="9" fill="#c8c8c8"/><rect x="634" y="396" width="1" height="9" fill="#c8c8c8"/><rect x="649" y="396" width="1" height="9" fill="#c8c8c8"/><rect x="665" y="396" width="1" height="9" fill="#c8c8c8"/><rect x="681" y="396" width="1" height="9" fill="#c8c8c8"/><rect x="697" y="396" width="1" height="9" fill="#c8c8c8"/><rect x="712" y="396" width="1" height="9" fill="#c8c8c8"/><rect x="728" y="396" width="1" height="9" fill="#c8c8c8"/><rect x="744" y="396" width="1" height="9" fill="#c8c8c8"/><rect x="759" y="396" width="1" height="9" fill="#c8c8c8"/><rect x="775" y="396" width="1" height="9" fill="#c8c8c8"/><rect x="791" y="396" width="1" height="9" fill="#c8c8c8"/><rect x="410" y="138" width="9" height="1" fill="#c8c8c8"/><rect x="410" y="152" width="9" height="1" fill="#c8c8c8"/><rect x="410" y="166" width="9" height="1" fill="#c8c8c8"/><rect x="410" y="180" width="9" height="1" fill="#c8c8c8"/><rect x="410" y="193" width="9" height="1" fill="#c8c8c8"/><rect x="410" y="207" width="9" height="1" fill="#c8c8c8"/><rect x="410" y="221" width="9" height="1" fill="#c8c8c8"/><rect x="410" y="235" width="9" height="1" fill="#c8c8c8"/><rect x="410" y="248" width="9" height="1" fill="#c8c8c8"/><rect x="410" y="262" width="9" height="1" fill="#c8c8c8"/><rect x="410" y="276" width="9" height="1" fill="#c8c8c8"/><rect x="410" y="290" width="9" height="1" fill="#c8c8c8"/><rect x="410" y="303" width="9" height="1" fill="#c8c8c8"/><rect x="410" y="317" width="9" height="1" fill="#c8c8c8"/><rect x="410" y="331" width="9" height="1" fill="#c8c8c8"/><rect x="410" y="345" width="9" height="1" fill="#c8c8c8"/><rect x="410" y="358" width="9" height="1" fill="#c8c8c8"/><rect x="410" y="372" width="9" height="1" fill="#c8c8c8"/><rect x="410" y="386" width="9" height="1" fill="#c8c8c8"/><rect x="410" y="413" width="9" height="1" fill="#c8c8c8"/><rect x="410" y="427" width="9" height="1" fill="#c8c8c8"/><rect x="410" y="441" width="9" height="1" fill="#c8c8c8"/><rect x="410" y="455" width="9" height="1" fill="#c8c8c8"/><rect x="410" y="468" width="9" height="1" fill="#c8c8c8"/><rect x="410" y="482" width="9" height="1" fill="#c8c8c8"/><rect x="410" y="496" width="9" height="1" fill="#c8c8c8"/><rect x="410" y="510" width="9" height="1" fill="#c8c8c8"/><rect x="410" y="523" width="9" height="1" fill="#c8c8c8"/><rect x="99" y="138" width="1" height="1" fill="#c8c8c8"/><rect x="99" y="152" width="1" height="1" fill="#c8c8c8"/><rect x="99" y="166" width="1" height="1" fill="#c8c8c8"/><rect x="99" y="180" width="1" height="1" fill="#c8c8c8"/><rect x="99" y="207" width="1" height="1" fill="#c8c8c8"/><rect x="99" y="221" width="1" height="1" fill="#c8c8c8"/><rect x="99" y="235" width="1" height="1" fill="#c8c8c8"/><rect x="99" y="248" width="1" height="1" fill="#c8c8c8"/><rect x="99" y="276" width="1" height="1" fill="#c8c8c8"/><rect x="99" y="290" width="1" height="1" fill="#c8c8c8"/><rect x="99" y="303" width="1" height="1" fill="#c8c8c8"/><rect x="99" y="317" width="1" height="1" fill="#c8c8c8"/><rect x="99" y="345" width="1" height="1" fill="#c8c8c8"/><rect x="99" y="358" width="1" height="1" fill="#c8c8c8"/><rect x="99" y="372" width="1" height="1" fill="#c8c8c8"/><rect x="99" y="386" width="1" height="1" fill="#c8c8c8"/><rect x="99" y="413" width="1" height="1" fill="#c8c8c8"/><rect x="99" y="427" width="1" height="1" fill="#c8c8c8"/><rect x="99" y="441" width="1" height="1" fill="#c8c8c8"/><rect x="99" y="455" width="1" height="1" fill="#c8c8c8"/><rect x="99" y="482" width="1" height="1" fill="#c8c8c8"/><rect x="99" y="496" width="1" height="1" fill="#c8c8c8"/><rect x="99" y="510" width="1" height="1" fill="#c8c8c8"/><rect x="99" y="523" width="1" height="1" fill="#c8c8c8"/><rect x="178" y="138" width="1" height="1" fill="#c8c8c8"/><rect x="178" y="152" width="1" height="1" fill="#c8c8c8"/><rect x="178" y="166" width="1" height="1" fill="#c8c8c8"/><rect x="178" y="180" width="1" height="1" fill="#c8c8c8"/><rect x="178" y="207" width="1" height="1" fill="#c8c8c8"/><rect x="178" y="221" width="1" height="1" fill="#c8c8c8"/><rect x="178" y="235" width="1" height="1" fill="#c8c8c8"/><rect x="178" y="248" width="1" height="1" fill="#c8c8c8"/><rect x="178" y="276" width="1" height="1" fill="#c8c8c8"/><rect x="178" y="290" width="1" height="1" fill="#c8c8c8"/><rect x="178" y="303" width="1" height="1" fill="#c8c8c8"/><rect x="178" y="317" width="1" height="1" fill="#c8c8c8"/><rect x="178" y="345" width="1" height="1" fill="#c8c8c8"/><rect x="178" y="358" width="1" height="1" fill="#c8c8c8"/><rect x="178" y="372" width="1" height="1" fill="#c8c8c8"/><rect x="178" y="386" width="1" height="1" fill="#c8c8c8"/><rect x="178" y="413" width="1" height="1" fill="#c8c8c8"/><rect x="178" y="427" width="1" height="1" fill="#c8c8c8"/><rect x="178" y="441" width="1" height="1" fill="#c8c8c8"/><rect x="178" y="455" width="1" height="1" fill="#c8c8c8"/><rect x="178" y="482" width="1" height="1" fill="#c8c8c8"/><rect x="178" y="496" width="1" height="1" fill="#c8c8c8"/><rect x="178" y="510" width="1" height="1" fill="#c8c8c8"/><rect x="178" y="523" width="1" height="1" fill="#c8c8c8"/><rect x="256" y="138" width="1" height="1" fill="#c8c8c8"/><rect x="256" y="152" width="1" height="1" fill="#c8c8c8"/><rect x="256" y="166" width="1" height="1" fill="#c8c8c8"/><rect x="256" y="180" width="1" height="1" fill="#c8c8c8"/><rect x="256" y="207" width="1" height="1" fill="#c8c8c8"/><rect x="256" y="221" width="1" height="1" fill="#c8c8c8"/><rect x="256" y="235" width="1" height="1" fill="#c8c8c8"/><rect x="256" y="248" width="1" height="1" fill="#c8c8c8"/><rect x="256" y="276" width="1" height="1" fill="#c8c8c8"/><rect x="256" y="290" width="1" height="1" fill="#c8c8c8"/><rect x="256" y="303" width="1" height="1" fill="#c8c8c8"/><rect x="256" y="317" width="1" height="1" fill="#c8c8c8"/><rect x="256" y="345" width="1" height="1" fill="#c8c8c8"/><rect x="256" y="358" width="1" height="1" fill="#c8c8c8"/><rect x="256" y="372" width="1" height="1" fill="#c8c8c8"/><rect x="256" y="386" width="1" height="1" fill="#c8c8c8"/><rect x="256" y="413" width="1" height="1" fill="#c8c8c8"/><rect x="256" y="427" width="1" height="1" fill="#c8c8c8"/><rect x="256" y="441" width="1" height="1" fill="#c8c8c8"/><rect x="256" y="455" width="1" height="1" fill="#c8c8c8"/><rect x="256" y="482" width="1" height="1" fill="#c8c8c8"/><rect x="256" y="496" width="1" height="1" fill="#c8c8c8"/><rect x="256" y="510" width="1" height="1" fill="#c8c8c8"/><rect x="256" y="523" width="1" height="1" fill="#c8c8c8"/><rect x="335" y="138" width="1" height="1" fill="#c8c8c8"/><rect x="335" y="152" width="1" height="1" fill="#c8c8c8"/><rect x="335" y="166" width="1" height="1" fill="#c8c8c8"/><rect x="335" y="180" width="1" height="1" fill="#c8c8c8"/><rect x="335" y="207" width="1" height="1" fill="#c8c8c8"/><rect x="335" y="221" width="1" height="1" fill="#c8c8c8"/><rect x="335" y="235" width="1" height="1" fill="#c8c8c8"/><rect x="335" y="248" width="1" height="1" fill="#c8c8c8"/><rect x="335" y="276" width="1" height="1" fill="#c8c8c8"/><rect x="335" y="290" width="1" height="1" fill="#c8c8c8"/><rect x="335" y="303" width="1" height="1" fill="#c8c8c8"/><rect x="335" y="317" width="1" height="1" fill="#c8c8c8"/><rect x="335" y="345" width="1" height="1" fill="#c8c8c8"/><rect x="335" y="358" width="1" height="1" fill="#c8c8c8"/><rect x="335" y="372" width="1" height="1" fill="#c8c8c8"/><rect x="335" y="386" width="1" height="1" fill="#c8c8c8"/><rect x="335" y="413" width="1" height="1" fill="#c8c8c8"/><rect x="335" y="427" width="1" height="1" fill="#c8c8c8"/><rect x="335" y="441" width="1" height="1" fill="#c8c8c8"/><rect x="335" y="455" width="1" height="1" fill="#c8c8c8"/><rect x="335" y="482" width="1" height="1" fill="#c8c8c8"/><rect x="335" y="496" width="1" height="1" fill="#c8c8c8"/><rect x="335" y="510" width="1" height="1" fill="#c8c8c8"/><rect x="335" y="523" width="1" height="1" fill="#c8c8c8"/><rect x="492" y="138" width="1" height="1" fill="#c8c8c8"/><rect x="492" y="152" width="1" height="1" fill="#c8c8c8"/><rect x="492" y="166" width="1" height="1" fill="#c8c8c8"/><rect x="492" y="180" width="1" height="1" fill="#c8c8c8"/><rect x="492" y="207" width="1" height="1" fill="#c8c8c8"/><rect x="492" y="221" width="1" height="1" fill="#c8c8c8"/><rect x="492" y="235" width="1" height="1" fill="#c8c8c8"/><rect x="492" y="248" width="1" height="1" fill="#c8c8c8"/><rect x="492" y="276" width="1" height="1" fill="#c8c8c8"/><rect x="492" y="290" width="1" height="1" fill="#c8c8c8"/><rect x="492" y="303" width="1" height="1" fill="#c8c8c8"/><rect x="492" y="317" width="1" height="1" fill="#c8c8c8"/><rect x="492" y="345" width="1" height="1" fill="#c8c8c8"/><rect x="492" y="358" width="1" height="1" fill="#c8c8c8"/><rect x="492" y="372" width="1" height="1" fill="#c8c8c8"/><rect x="492" y="386" width="1" height="1" fill="#c8c8c8"/><rect x="492" y="413" width="1" height="1" fill="#c8c8c8"/><rect x="492" y="427" width="1" height="1" fill="#c8c8c8"/><rect x="492" y="441" width="1" height="1" fill="#c8c8c8"/><rect x="492" y="455" width="1" height="1" fill="#c8c8c8"/><rect x="492" y="482" width="1" height="1" fill="#c8c8c8"/><rect x="492" y="496" width="1" height="1" fill="#c8c8c8"/><rect x="492" y="510" width="1" height="1" fill="#c8c8c8"/><rect x="492" y="523" width="1" height="1" fill="#c8c8c8"/><rect x="571" y="138" width="1" height="1" fill="#c8c8c8"/><rect x="571" y="152" width="1" height="1" fill="#c8c8c8"/><rect x="571" y="166" width="1" height="1" fill="#c8c8c8"/><rect x="571" y="180" width="1" height="1" fill="#c8c8c8"/><rect x="571" y="207" width="1" height="1" fill="#c8c8c8"/><rect x="571" y="221" width="1" height="1" fill="#c8c8c8"/><rect x="571" y="235" width="1" height="1" fill="#c8c8c8"/><rect x="571" y="248" width="1" height="1" fill="#c8c8c8"/><rect x="571" y="276" width="1" height="1" fill="#c8c8c8"/><rect x="571" y="290" width="1" height="1" fill="#c8c8c8"/><rect x="571" y="303" width="1" height="1" fill="#c8c8c8"/><rect x="571" y="317" width="1" height="1" fill="#c8c8c8"/><rect x="571" y="345" width="1" height="1" fill="#c8c8c8"/><rect x="571" y="358" width="1" height="1" fill="#c8c8c8"/><rect x="571" y="372" width="1" height="1" fill="#c8c8c8"/><rect x="571" y="386" width="1" height="1" fill="#c8c8c8"/><rect x="571" y="413" width="1" height="1" fill="#c8c8c8"/><rect x="571" y="427" width="1" height="1" fill="#c8c8c8"/><rect x="571" y="441" width="1" height="1" fill="#c8c8c8"/><rect x="571" y="455" width="1" height="1" fill="#c8c8c8"/><rect x="571" y="482" width="1" height="1" fill="#c8c8c8"/><rect x="571" y="496" width="1" height="1" fill="#c8c8c8"/><rect x="571" y="510" width="1" height="1" fill="#c8c8c8"/><rect x="571" y="523" width="1" height="1" fill="#c8c8c8"/><rect x="649" y="138" width="1" height="1" fill="#c8c8c8"/><rect x="649" y="152" width="1" height="1" fill="#c8c8c8"/><rect x="649" y="166" width="1" height="1" fill="#c8c8c8"/><rect x="649" y="180" width="1" height="1" fill="#c8c8c8"/><rect x="649" y="207" width="1" height="1" fill="#c8c8c8"/><rect x="649" y="221" width="1" height="1" fill="#c8c8c8"/><rect x="649" y="235" width="1" height="1" fill="#c8c8c8"/><rect x="649" y="248" width="1" height="1" fill="#c8c8c8"/><rect x="649" y="276" width="1" height="1" fill="#c8c8c8"/><rect x="649" y="290" width="1" height="1" fill="#c8c8c8"/><rect x="649" y="303" width="1" height="1" fill="#c8c8c8"/><rect x="649" y="317" width="1" height="1" fill="#c8c8c8"/><rect x="649" y="345" width="1" height="1" fill="#c8c8c8"/><rect x="649" y="358" width="1" height="1" fill="#c8c8c8"/><rect x="649" y="372" width="1" height="1" fill="#c8c8c8"/><rect x="649" y="386" width="1" height="1" fill="#c8c8c8"/><rect x="649" y="413" width="1" height="1" fill="#c8c8c8"/><rect x="649" y="427" width="1" height="1" fill="#c8c8c8"/><rect x="649" y="441" width="1" height="1" fill="#c8c8c8"/><rect x="649" y="455" width="1" height="1" fill="#c8c8c8"/><rect x="649" y="482" width="1" height="1" fill="#c8c8c8"/><rect x="649" y="496" width="1" height="1" fill="#c8c8c8"/><rect x="649" y="510" width="1" height="1" fill="#c8c8c8"/><rect x="649" y="523" width="1" height="1" fill="#c8c8c8"/><rect x="728" y="138" width="1" height="1" fill="#c8c8c8"/><rect x="728" y="152" width="1" height="1" fill="#c8c8c8"/><rect x="728" y="166" width="1" height="1" fill="#c8c8c8"/><rect x="728" y="180" width="1" height="1" fill="#c8c8c8"/><rect x="728" y="207" width="1" height="1" fill="#c8c8c8"/><rect x="728" y="221" width="1" height="1" fill="#c8c8c8"/><rect x="728" y="235" width="1" height="1" fill="#c8c8c8"/><rect x="728" y="248" width="1" height="1" fill="#c8c8c8"/><rect x="728" y="276" width="1" height="1" fill="#c8c8c8"/><rect x="728" y="290" width="1" height="1" fill="#c8c8c8"/><rect x="728" y="303" width="1" height="1" fill="#c8c8c8"/><rect x="728" y="317" width="1" height="1" fill="#c8c8c8"/><rect x="728" y="345" width="1" height="1" fill="#c8c8c8"/><rect x="728" y="358" width="1" height="1" fill="#c8c8c8"/><rect x="728" y="372" width="1" height="1" fill="#c8c8c8"/><rect x="728" y="386" width="1" height="1" fill="#c8c8c8"/><rect x="728" y="413" width="1" height="1" fill="#c8c8c8"/><rect x="728" y="427" width="1" height="1" fill="#c8c8c8"/><rect x="728" y="441" width="1" height="1" fill="#c8c8c8"/><rect x="728" y="455" width="1" height="1" fill="#c8c8c8"/><rect x="728" y="482" width="1" height="1" fill="#c8c8c8"/><rect x="728" y="496" width="1" height="1" fill="#c8c8c8"/><rect x="728" y="510" width="1" height="1" fill="#c8c8c8"/><rect x="728" y="523" width="1" height="1" fill="#c8c8c8"/><rect x="36" y="193" width="1" height="1" fill="#c8c8c8"/><rect x="52" y="193" width="1" height="1" fill="#c8c8c8"/><rect x="68" y="193" width="1" height="1" fill="#c8c8c8"/><rect x="83" y="193" width="1" height="1" fill="#c8c8c8"/><rect x="99" y="193" width="1" height="1" fill="#c8c8c8"/><rect x="115" y="193" width="1" height="1" fill="#c8c8c8"/><rect x="130" y="193" width="1" height="1" fill="#c8c8c8"/><rect x="146" y="193" width="1" height="1" fill="#c8c8c8"/><rect x="162" y="193" width="1" height="1" fill="#c8c8c8"/><rect x="178" y="193" width="1" height="1" fill="#c8c8c8"/><rect x="193" y="193" width="1" height="1" fill="#c8c8c8"/><rect x="209" y="193" width="1" height="1" fill="#c8c8c8"/><rect x="225" y="193" width="1" height="1" fill="#c8c8c8"/><rect x="241" y="193" width="1" height="1" fill="#c8c8c8"/><rect x="256" y="193" width="1" height="1" fill="#c8c8c8"/><rect x="272" y="193" width="1" height="1" fill="#c8c8c8"/><rect x="288" y="193" width="1" height="1" fill="#c8c8c8"/><rect x="303" y="193" width="1" height="1" fill="#c8c8c8"/><rect x="319" y="193" width="1" height="1" fill="#c8c8c8"/><rect x="335" y="193" width="1" height="1" fill="#c8c8c8"/><rect x="351" y="193" width="1" height="1" fill="#c8c8c8"/><rect x="366" y="193" width="1" height="1" fill="#c8c8c8"/><rect x="382" y="193" width="1" height="1" fill="#c8c8c8"/><rect x="398" y="193" width="1" height="1" fill="#c8c8c8"/><rect x="429" y="193" width="1" height="1" fill="#c8c8c8"/><rect x="445" y="193" width="1" height="1" fill="#c8c8c8"/><rect x="461" y="193" width="1" height="1" fill="#c8c8c8"/><rect x="476" y="193" width="1" height="1" fill="#c8c8c8"/><rect x="492" y="193" width="1" height="1" fill="#c8c8c8"/><rect x="508" y="193" width="1" height="1" fill="#c8c8c8"/><rect x="524" y="193" width="1" height="1" fill="#c8c8c8"/><rect x="539" y="193" width="1" height="1" fill="#c8c8c8"/><rect x="555" y="193" width="1" height="1" fill="#c8c8c8"/><rect x="571" y="193" width="1" height="1" fill="#c8c8c8"/><rect x="586" y="193" width="1" height="1" fill="#c8c8c8"/><rect x="602" y="193" width="1" height="1" fill="#c8c8c8"/><rect x="618" y="193" width="1" height="1" fill="#c8c8c8"/><rect x="634" y="193" width="1" height="1" fill="#c8c8c8"/><rect x="649" y="193" width="1" height="1" fill="#c8c8c8"/><rect x="665" y="193" width="1" height="1" fill="#c8c8c8"/><rect x="681" y="193" width="1" height="1" fill="#c8c8c8"/><rect x="697" y="193" width="1" height="1" fill="#c8c8c8"/><rect x="712" y="193" width="1" height="1" fill="#c8c8c8"/><rect x="728" y="193" width="1" height="1" fill="#c8c8c8"/><rect x="744" y="193" width="1" height="1" fill="#c8c8c8"/><rect x="759" y="193" width="1" height="1" fill="#c8c8c8"/><rect x="775" y="193" width="1" height="1" fill="#c8c8c8"/><rect x="791" y="193" width="1" height="1" fill="#c8c8c8"/><rect x="36" y="262" width="1" height="1" fill="#c8c8c8"/><rect x="52" y="262" width="1" height="1" fill="#c8c8c8"/><rect x="68" y="262" width="1" height="1" fill="#c8c8c8"/><rect x="83" y="262" width="1" height="1" fill="#c8c8c8"/><rect x="99" y="262" width="1" height="1" fill="#c8c8c8"/><rect x="115" y="262" width="1" height="1" fill="#c8c8c8"/><rect x="130" y="262" width="1" height="1" fill="#c8c8c8"/><rect x="146" y="262" width="1" height="1" fill="#c8c8c8"/><rect x="162" y="262" width="1" height="1" fill="#c8c8c8"/><rect x="178" y="262" width="1" height="1" fill="#c8c8c8"/><rect x="193" y="262" width="1" height="1" fill="#c8c8c8"/><rect x="209" y="262" width="1" height="1" fill="#c8c8c8"/><rect x="225" y="262" width="1" height="1" fill="#c8c8c8"/><rect x="241" y="262" width="1" height="1" fill="#c8c8c8"/><rect x="256" y="262" width="1" height="1" fill="#c8c8c8"/><rect x="272" y="262" width="1" height="1" fill="#c8c8c8"/><rect x="288" y="262" width="1" height="1" fill="#c8c8c8"/><rect x="303" y="262" width="1" height="1" fill="#c8c8c8"/><rect x="319" y="262" width="1" height="1" fill="#c8c8c8"/><rect x="335" y="262" width="1" height="1" fill="#c8c8c8"/><rect x="351" y="262" width="1" height="1" fill="#c8c8c8"/><rect x="366" y="262" width="1" height="1" fill="#c8c8c8"/><rect x="382" y="262" width="1" height="1" fill="#c8c8c8"/><rect x="398" y="262" width="1" height="1" fill="#c8c8c8"/><rect x="429" y="262" width="1" height="1" fill="#c8c8c8"/><rect x="445" y="262" width="1" height="1" fill="#c8c8c8"/><rect x="461" y="262" width="1" height="1" fill="#c8c8c8"/><rect x="476" y="262" width="1" height="1" fill="#c8c8c8"/><rect x="492" y="262" width="1" height="1" fill="#c8c8c8"/><rect x="508" y="262" width="1" height="1" fill="#c8c8c8"/><rect x="524" y="262" width="1" height="1" fill="#c8c8c8"/><rect x="539" y="262" width="1" height="1" fill="#c8c8c8"/><rect x="555" y="262" width="1" height="1" fill="#c8c8c8"/><rect x="571" y="262" width="1" height="1" fill="#c8c8c8"/><rect x="586" y="262" width="1" height="1" fill="#c8c8c8"/><rect x="602" y="262" width="1" height="1" fill="#c8c8c8"/><rect x="618" y="262" width="1" height="1" fill="#c8c8c8"/><rect x="634" y="262" width="1" height="1" fill="#c8c8c8"/><rect x="649" y="262" width="1" height="1" fill="#c8c8c8"/><rect x="665" y="262" width="1" height="1" fill="#c8c8c8"/><rect x="681" y="262" width="1" height="1" fill="#c8c8c8"/><rect x="697" y="262" width="1" height="1" fill="#c8c8c8"/><rect x="712" y="262" width="1" height="1" fill="#c8c8c8"/><rect x="728" y="262" width="1" height="1" fill="#c8c8c8"/><rect x="744" y="262" width="1" height="1" fill="#c8c8c8"/><rect x="759" y="262" width="1" height="1" fill="#c8c8c8"/><rect x="775" y="262" width="1" height="1" fill="#c8c8c8"/><rect x="791" y="262" width="1" height="1" fill="#c8c8c8"/><rect x="36" y="331" width="1" height="1" fill="#c8c8c8"/><rect x="52" y="331" width="1" height="1" fill="#c8c8c8"/><rect x="68" y="331" width="1" height="1" fill="#c8c8c8"/><rect x="83" y="331" width="1" height="1" fill="#c8c8c8"/><rect x="99" y="331" width="1" height="1" fill="#c8c8c8"/><rect x="115" y="331" width="1" height="1" fill="#c8c8c8"/><rect x="130" y="331" width="1" height="1" fill="#c8c8c8"/><rect x="146" y="331" width="1" height="1" fill="#c8c8c8"/><rect x="162" y="331" width="1" height="1" fill="#c8c8c8"/><rect x="178" y="331" width="1" height="1" fill="#c8c8c8"/><rect x="193" y="331" width="1" height="1" fill="#c8c8c8"/><rect x="209" y="331" width="1" height="1" fill="#c8c8c8"/><rect x="225" y="331" width="1" height="1" fill="#c8c8c8"/><rect x="241" y="331" width="1" height="1" fill="#c8c8c8"/><rect x="256" y="331" width="1" height="1" fill="#c8c8c8"/><rect x="272" y="331" width="1" height="1" fill="#c8c8c8"/><rect x="288" y="331" width="1" height="1" fill="#c8c8c8"/><rect x="303" y="331" width="1" height="1" fill="#c8c8c8"/><rect x="319" y="331" width="1" height="1" fill="#c8c8c8"/><rect x="335" y="331" width="1" height="1" fill="#c8c8c8"/><rect x="351" y="331" width="1" height="1" fill="#c8c8c8"/><rect x="366" y="331" width="1" height="1" fill="#c8c8c8"/><rect x="382" y="331" width="1" height="1" fill="#c8c8c8"/><rect x="398" y="331" width="1" height="1" fill="#c8c8c8"/><rect x="429" y="331" width="1" height="1" fill="#c8c8c8"/><rect x="445" y="331" width="1" height="1" fill="#c8c8c8"/><rect x="461" y="331" width="1" height="1" fill="#c8c8c8"/><rect x="476" y="331" width="1" height="1" fill="#c8c8c8"/><rect x="492" y="331" width="1" height="1" fill="#c8c8c8"/><rect x="508" y="331" width="1" height="1" fill="#c8c8c8"/><rect x="524" y="331" width="1" height="1" fill="#c8c8c8"/><rect x="539" y="331" width="1" height="1" fill="#c8c8c8"/><rect x="555" y="331" width="1" height="1" fill="#c8c8c8"/><rect x="571" y="331" width="1" height="1" fill="#c8c8c8"/><rect x="586" y="331" width="1" height="1" fill="#c8c8c8"/><rect x="602" y="331" width="1" height="1" fill="#c8c8c8"/><rect x="618" y="331" width="1" height="1" fill="#c8c8c8"/><rect x="634" y="331" width="1" height="1" fill="#c8c8c8"/><rect x="649" y="331" width="1" height="1" fill="#c8c8c8"/><rect x="665" y="331" width="1" height="1" fill="#c8c8c8"/><rect x="681" y="331" width="1" height="1" fill="#c8c8c8"/><rect x="697" y="331" width="1" height="1" fill="#c8c8c8"/><rect x="712" y="331" width="1" height="1" fill="#c8c8c8"/><rect x="728" y="331" width="1" height="1" fill="#c8c8c8"/><rect x="744" y="331" width="1" height="1" fill="#c8c8c8"/><rect x="759" y="331" width="1" height="1" fill="#c8c8c8"/><rect x="775" y="331" width="1" height="1" fill="#c8c8c8"/><rect x="791" y="331" width="1" height="1" fill="#c8c8c8"/><rect x="36" y="468" width="1" height="1" fill="#c8c8c8"/><rect x="52" y="468" width="1" height="1" fill="#c8c8c8"/><rect x="68" y="468" width="1" height="1" fill="#c8c8c8"/><rect x="83" y="468" width="1" height="1" fill="#c8c8c8"/><rect x="99" y="468" width="1" height="1" fill="#c8c8c8"/><rect x="115" y="468" width="1" height="1" fill="#c8c8c8"/><rect x="130" y="468" width="1" height="1" fill="#c8c8c8"/><rect x="146" y="468" width="1" height="1" fill="#c8c8c8"/><rect x="162" y="468" width="1" height="1" fill="#c8c8c8"/><rect x="178" y="468" width="1" height="1" fill="#c8c8c8"/><rect x="193" y="468" width="1" height="1" fill="#c8c8c8"/><rect x="209" y="468" width="1" height="1" fill="#c8c8c8"/><rect x="225" y="468" width="1" height="1" fill="#c8c8c8"/><rect x="241" y="468" width="1" height="1" fill="#c8c8c8"/><rect x="256" y="468" width="1" height="1" fill="#c8c8c8"/><rect x="272" y="468" width="1" height="1" fill="#c8c8c8"/><rect x="288" y="468" width="1" height="1" fill="#c8c8c8"/><rect x="303" y="468" width="1" height="1" fill="#c8c8c8"/><rect x="319" y="468" width="1" height="1" fill="#c8c8c8"/><rect x="335" y="468" width="1" height="1" fill="#c8c8c8"/><rect x="351" y="468" width="1" height="1" fill="#c8c8c8"/><rect x="366" y="468" width="1" height="1" fill="#c8c8c8"/><rect x="382" y="468" width="1" height="1" fill="#c8c8c8"/><rect x="398" y="468" width="1" height="1" fill="#c8c8c8"/><rect x="429" y="468" width="1" height="1" fill="#c8c8c8"/><rect x="445" y="468" width="1" height="1" fill="#c8c8c8"/><rect x="461" y="468" width="1" height="1" fill="#c8c8c8"/><rect x="476" y="468" width="1" height="1" fill="#c8c8c8"/><rect x="492" y="468" width="1" height="1" fill="#c8c8c8"/><rect x="508" y="468" width="1" height="1" fill="#c8c8c8"/><rect x="524" y="468" width="1" height="1" fill="#c8c8c8"/><rect x="539" y="468" width="1" height="1" fill="#c8c8c8"/><rect x="555" y="468" width="1" height="1" fill="#c8c8c8"/><rect x="571" y="468" width="1" height="1" fill="#c8c8c8"/><rect x="586" y="468" width="1" height="1" fill="#c8c8c8"/><rect x="602" y="468" width="1" height="1" fill="#c8c8c8"/><rect x="618" y="468" width="1" height="1" fill="#c8c8c8"/><rect x="634" y="468" width="1" height="1" fill="#c8c8c8"/><rect x="649" y="468" width="1" height="1" fill="#c8c8c8"/><rect x="665" y="468" width="1" height="1" fill="#c8c8c8"/><rect x="681" y="468" width="1" height="1" fill="#c8c8c8"/><rect x="697" y="468" width="1" height="1" fill="#c8c8c8"/><rect x="712" y="468" width="1" height="1" fill="#c8c8c8"/><rect x="728" y="468" width="1" height="1" fill="#c8c8c8"/><rect x="744" y="468" width="1" height="1" fill="#c8c8c8"/><rect x="759" y="468" width="1" height="1" fill="#c8c8c8"/><rect x="775" y="468" width="1" height="1" fill="#c8c8c8"/><rect x="791" y="468" width="1" height="1" fill="#c8c8c8"/><path d="M22.5 151.5 L22.5 313.5 L25.5 313.5 L26.5 151.5 L31.5 151.5 L33.5 313.5 L35.5 313.5 L36.5 151.5 L40.5 151.5 L42.5 313.5 L45.5 313.5 L46.5 151.5 L50.5 151.5 L52.5 313.5 L55.5 313.5 L56.5 151.5 L60.5 151.5 L62.5 313.5 L65.5 313.5 L66.5 151.5 L71.5 151.5 L73.5 313.5 L75.5 313.5 L76.5 151.5 L80.5 151.5 L82.5 313.5 L84.5 313.5 L85.5 151.5 L88.5 151.5 L89.5 149.5 L90.5 151.5 L90.5 151.5 L92.5 313.5 L94.5 313.5 L95.5 151.5 L99.5 151.5 L101.5 313.5 L104.5 313.5 L105.5 151.5 L106.5 151.5 L107.5 150.5 L108.5 151.5 L109.5 151.5 L111.5 313.5 L114.5 313.5 L115.5 151.5 L117.5 151.5 L118.5 149.5 L119.5 151.5 L119.5 151.5 L121.5 313.5 L123.5 313.5 L124.5 151.5 L129.5 151.5 L131.5 313.5 L134.5 313.5 L135.5 151.5 L139.5 151.5 L141.5 313.5 L144.5 313.5 L145.5 151.5 L146.5 151.5 L147.5 149.5 L148.5 151.5 L149.5 151.5 L151.5 313.5 L153.5 313.5 L154.5 151.5 L159.5 151.5 L161.5 313.5 L163.5 313.5 L164.5 151.5 L168.5 151.5 L170.5 313.5 L174.5 313.5 L175.5 151.5 L179.5 151.5 L181.5 313.5 L184.5 313.5 L185.5 151.5 L189.5 151.5 L191.5 313.5 L193.5 313.5 L194.5 151.5 L194.5 151.5 L195.5 150.5 L196.5 151.5 L199.5 151.5 L201.5 313.5 L203.5 313.5 L204.5 151.5 L208.5 151.5 L210.5 313.5 L213.5 313.5 L214.5 151.5 L219.5 151.5 L221.5 313.5 L224.5 313.5 L225.5 151.5 L229.5 151.5 L231.5 313.5 L233.5 313.5 L234.5 151.5 L235.5 151.5 L236.5 149.5 L237.5 151.5 L239.5 151.5 L241.5 313.5 L244.5 313.5 L245.5 151.5 L246.5 151.5 L247.5 150.5 L248.5 151.5 L249.5 151.5 L251.5 313.5 L254.5 313.5 L255.5 151.5 L255.5 151.5 L256.5 150.5 L257.5 151.5 L259.5 151.5 L261.5 313.5 L264.5 313.5 L265.5 151.5 L269.5 151.5 L271.5 313.5 L274.5 313.5 L275.5 151.5 L277.5 151.5 L278.5 150.5 L279.5 151.5 L279.5 151.5 L281.5 313.5 L284.5 313.5 L285.5 151.5 L289.5 151.5 L291.5 313.5 L294.5 313.5 L295.5 151.5 L295.5 151.5 L296.5 149.5 L297.5 151.5 L299.5 151.5 L301.5 313.5 L304.5 313.5 L305.5 151.5 L305.5 151.5 L306.5 149.5 L307.5 151.5 L309.5 151.5 L311.5 313.5 L313.5 313.5 L314.5 151.5 L319.5 151.5 L321.5 313.5 L323.5 313.5 L324.5 151.5 L326.5 151.5 L327.5 150.5 L328.5 151.5 L329.5 151.5 L331.5 313.5 L333.5 313.5 L334.5 151.5 L334.5 151.5 L335.5 149.5 L336.5 151.5 L338.5 151.5 L340.5 313.5 L343.5 313.5 L344.5 151.5 L344.5 151.5 L345.5 150.5 L346.5 151.5 L348.5 151.5 L350.5 313.5 L353.5 313.5 L354.5 151.5 L358.5 151.5 L360.5 313.5 L363.5 313.5 L364.5 151.5 L368.5 151.5 L370.5 313.5 L373.5 313.5 L374.5 151.5 L374.5 151.5 L375.5 149.5 L376.5 151.5 L378.5 151.5 L380.5 313.5 L383.5 313.5 L384.5 151.5 L388.5 151.5 L390.5 313.5 L392.5 313.5 L393.5 151.5 L397.5 151.5 L399.5 313.5 L402.5 313.5 L403.5 150.5 L403.5 150.5 L404.5 149.5 L405.5 150.5 L407.5 150.5 L409.5 313.5 L412.5 313.5 L413.5 150.5 L426.5 150.5 L427.5 149.5 L428.5 150.5 L416.5 149.5 L419.5 149.5 L422.5 150.5 L425.5 150.5 L428.5 150.5 L431.5 148.5 L434.5 148.5 L436.5 150.5 L438.5 313.5 L440.5 313.5 L441.5 150.5 L442.5 150.5 L443.5 149.5 L444.5 150.5 L446.5 150.5 L448.5 313.5 L451.5 313.5 L452.5 150.5 L456.5 150.5 L458.5 313.5 L461.5 313.5 L462.5 150.5 L466.5 150.5 L468.5 313.5 L471.5 313.5 L472.5 150.5 L476.5 150.5 L478.5 313.5 L481.5 313.5 L482.5 150.5 L483.5 150.5 L484.5 149.5 L485.5 150.5 L486.5 150.5 L488.5 313.5 L491.5 313.5 L492.5 150.5 L493.5 150.5 L494.5 149.5 L495.5 150.5 L497.5 150.5 L499.5 313.5 L501.5 313.5 L502.5 150.5 L504.5 150.5 L505.5 149.5 L506.5 150.5 L507.5 150.5 L509.5 313.5 L511.5 313.5 L512.5 150.5 L515.5 150.5 L516.5 148.5 L517.5 150.5 L517.5 150.5 L519.5 313.5 L521.5 313.5 L522.5 150.5 L526.5 150.5 L528.5 313.5 L531.5 313.5 L532.5 150.5 L532.5 150.5 L533.5 149.5 L534.5 150.5 L536.5 150.5 L538.5 313.5 L541.5 313.5 L542.5 150.5 L542.5 150.5 L543.5 148.5 L544.5 150.5 L546.5 150.5 L548.5 313.5 L551.5 313.5 L552.5 150.5 L553.5 150.5 L554.5 149.5 L555.5 150.5 L556.5 150.5 L558.5 313.5 L561.5 313.5 L562.5 150.5 L562.5 150.5 L563.5 149.5 L564.5 150.5 L566.5 150.5 L568.5 313.5 L570.5 313.5 L571.5 150.5 L575.5 150.5 L577.5 313.5 L580.5 313.5 L581.5 150.5 L583.5 150.5 L584.5 149.5 L585.5 150.5 L585.5 150.5 L587.5 313.5 L590.5 313.5 L591.5 150.5 L592.5 150.5 L593.5 149.5 L594.5 150.5 L595.5 150.5 L597.5 313.5 L600.5 313.5 L601.5 150.5 L605.5 150.5 L607.5 313.5 L610.5 313.5 L611.5 150.5 L615.5 150.5 L617.5 313.5 L620.5 313.5 L621.5 150.5 L625.5 150.5 L627.5 313.5 L630.5 313.5 L631.5 150.5 L635.5 150.5 L637.5 313.5 L640.5 313.5 L641.5 151.5 L641.5 151.5 L642.5 150.5 L643.5 151.5 L645.5 151.5 L647.5 313.5 L649.5 313.5 L650.5 151.5 L654.5 151.5 L656.5 313.5 L659.5 313.5 L660.5 151.5 L664.5 151.5 L666.5 313.5 L669.5 313.5 L670.5 151.5 L670.5 151.5 L671.5 150.5 L672.5 151.5 L674.5 151.5 L676.5 313.5 L679.5 313.5 L680.5 151.5 L684.5 151.5 L686.5 313.5 L688.5 313.5 L689.5 151.5 L693.5 151.5 L695.5 313.5 L698.5 313.5 L699.5 151.5 L700.5 151.5 L701.5 150.5 L702.5 151.5 L703.5 151.5 L705.5 313.5 L708.5 313.5 L709.5 151.5 L713.5 151.5 L715.5 313.5 L717.5 313.5 L718.5 151.5 L718.5 151.5 L719.5 150.5 L720.5 151.5 L723.5 151.5 L725.5 313.5 L727.5 313.5 L728.5 151.5 L729.5 151.5 L730.5 150.5 L731.5 151.5 L732.5 151.5 L734.5 313.5 L738.5 313.5 L739.5 151.5 L743.5 151.5 L745.5 313.5 L748.5 313.5 L749.5 151.5 L750.5 151.5 L751.5 149.5 L752.5 151.5 L753.5 151.5 L755.5 313.5 L757.5 313.5 L758.5 151.5 L762.5 151.5 L764.5 313.5 L767.5 313.5 L768.5 151.5 L772.5 151.5 L774.5 313.5 L777.5 313.5 L778.5 151.5 L782.5 151.5 L784.5 313.5 L787.5 313.5 L788.5 151.5 L792.5 151.5 L794.5 313.5 L797.5 313.5 L798.5 151.5 L799.5 151.5 L800.5 149.5 L801.5 151.5 L802.5 151.5 L804.5 313.5 L806.5 313.5" fill="none" stroke="#ffff00" stroke-width="1"/><path d="M22.5 214.5 L26.5 214.5 L27.5 213.5 L28.5 214.5 L28.5 214.5 L29.5 212.5 L30.5 214.5 L40.5 214.5 L41.5 213.5 L42.5 214.5 L47.5 214.5 L48.5 212.5 L49.5 214.5 L56.5 214.5 L57.5 215.5 L58.5 214.5 L102.5 214.5 L103.5 215.5 L104.5 214.5 L111.5 214.5 L112.5 215.5 L113.5 214.5 L119.5 214.5 L120.5 213.5 L121.5 214.5 L125.5 214.5 L126.5 215.5 L127.5 214.5 L132.5 214.5 L132.5 214.5 L132.5 378.5 L135.5 378.5 L136.5 379.5 L137.5 378.5 L140.5 378.5 L141.5 379.5 L142.5 378.5 L142.5 378.5 L143.5 379.5 L144.5 378.5 L150.5 378.5 L151.5 377.5 L152.5 378.5 L163.5 378.5 L164.5 377.5 L165.5 378.5 L165.5 378.5 L166.5 379.5 L167.5 378.5 L167.5 378.5 L167.5 378.5 L168.5 214.5 L171.5 214.5 L172.5 215.5 L173.5 214.5 L188.5 214.5 L189.5 215.5 L190.5 214.5 L201.5 214.5 L202.5 213.5 L203.5 214.5 L207.5 214.5 L208.5 213.5 L209.5 214.5 L209.5 214.5 L210.5 215.5 L211.5 214.5 L214.5 214.5 L215.5 215.5 L216.5 214.5 L221.5 214.5 L222.5 215.5 L223.5 214.5 L284.5 214.5 L285.5 213.5 L286.5 214.5 L315.5 214.5 L316.5 215.5 L317.5 214.5 L340.5 214.5 L341.5 213.5 L342.5 214.5 L349.5 214.5 L350.5 213.5 L351.5 214.5 L361.5 214.5 L362.5 215.5 L363.5 214.5 L371.5 214.5 L372.5 213.5 L373.5 214.5 L373.5 214.5 L374.5 215.5 L375.5 214.5 L396.5 214.5 L397.5 213.5 L398.5 214.5 L430.5 214.5 L430.5 214.5 L430.5 378.5 L435.5 378.5 L436.5 379.5 L437.5 378.5 L445.5 378.5 L446.5 377.5 L447.5 378.5 L447.5 378.5 L448.5 377.5 L449.5 378.5 L462.5 378.5 L463.5 380.5 L464.5 378.5 L465.5 378.5 L465.5 378.5 L465.5 214.5 L477.5 214.5 L478.5 213.5 L479.5 214.5 L479.5 214.5 L480.5 215.5 L481.5 214.5 L503.5 214.5 L504.5 213.5 L505.5 214.5 L512.5 214.5 L513.5 212.5 L514.5 214.5 L517.5 214.5 L518.5 215.5 L519.5 214.5 L521.5 214.5 L522.5 213.5 L523.5 214.5 L526.5 214.5 L527.5 213.5 L528.5 214.5 L545.5 214.5 L546.5 213.5 L547.5 214.5 L579.5 214.5 L580.5 215.5 L581.5 214.5 L581.5 214.5 L582.5 215.5 L583.5 214.5 L613.5 214.5 L614.5 216.5 L615.5 214.5 L627.5 214.5 L628.5 213.5 L629.5 214.5 L653.5 214.5 L654.5 212.5 L655.5 214.5 L667.5 214.5 L668.5 213.5 L669.5 214.5 L679.5 214.5 L680.5 213.5 L681.5 214.5 L688.5 214.5 L689.5 213.5 L690.5 214.5 L704.5 214.5 L705.5 213.5 L706.5 214.5 L726.5 214.5 L726.5 214.5 L726.5 378.5 L730.5 378.5 L731.5 377.5 L732.5 378.5 L740.5 378.5 L741.5 380.5 L742.5 378.5 L742.5 378.5 L743.5 377.5 L744.5 378.5 L757.5 378.5 L758.5 377.5 L759.5 378.5 L759.5 378.5 L760.5 380.5 L761.5 378.5 L762.5 378.5 L762.5 378.5 L762.5 214.5 L767.5 214.5 L768.5 213.5 L769.5 214.5 L772.5 214.5 L773.5 215.5 L774.5 214.5 L781.5 214.5 L782.5 215.5 L783.5 214.5 L787.5 214.5 L788.5 215.5 L789.5 214.5 L789.5 214.5 L790.5 216.5 L791.5 214.5 L794.5 214.5 L795.5 213.5 L796.5 214.5 L805.5 214.5 L806.5 215.5 L807.5 214.5 L806.5 214.5" fill="none" stroke="#00ffff" stroke-width="1"/><path d="M22.5 355.5 L25.5 355.5 L26.5 356.5 L27.5 355.5 L27.5 355.5 L28.5 356.5 L29.5 355.5 L47.5 355.5 L48.5 356.5 L49.5 355.5 L56.5 355.5 L57.5 354.5 L58.5 355.5 L61.5 355.5 L62.5 356.5 L63.5 355.5 L63.5 355.5 L64.5 356.5 L65.5 355.5 L69.5 355.5 L70.5 356.5 L71.5 355.5 L81.5 355.5 L82.5 354.5 L83.5 355.5 L86.5 355.5 L87.5 356.5 L88.5 355.5 L88.5 355.5 L89.5 354.5 L90.5 355.5 L101.5 355.5 L102.5 356.5 L103.5 355.5 L109.5 355.5 L110.5 354.5 L111.5 355.5 L116.5 355.5 L117.5 356.5 L118.5 355.5 L124.5 355.5 L125.5 356.5 L126.5 355.5 L133.5 355.5 L134.5 354.5 L135.5 355.5 L135.5 355.5 L136.5 354.5 L137.5 355.5 L144.5 355.5 L145.5 353.5 L146.5 355.5 L146.5 355.5 L147.5 354.5 L148.5 355.5 L160.5 355.5 L161.5 354.5 L162.5 355.5 L162.5 355.5 L163.5 353.5 L164.5 355.5 L166.5 355.5 L166.5 355.5 L166.5 195.5 L168.5 189.5 L168.5 189.5 L169.5 190.5 L170.5 189.5 L177.5 189.5 L178.5 190.5 L179.5 189.5 L181.5 189.5 L182.5 191.5 L183.5 189.5 L183.5 189.5 L184.5 190.5 L185.5 189.5 L185.5 189.5 L186.5 188.5 L187.5 189.5 L192.5 189.5 L193.5 190.5 L194.5 189.5 L200.5 189.5 L201.5 188.5 L202.5 189.5 L207.5 189.5 L207.5 189.5 L207.5 355.5 L213.5 355.5 L214.5 354.5 L215.5 355.5 L215.5 355.5 L216.5 354.5 L217.5 355.5 L217.5 355.5 L218.5 354.5 L219.5 355.5 L219.5 355.5 L220.5 356.5 L221.5 355.5 L225.5 355.5 L226.5 354.5 L227.5 355.5 L245.5 355.5 L246.5 353.5 L247.5 355.5 L247.5 355.5 L248.5 356.5 L249.5 355.5 L249.5 355.5 L250.5 354.5 L251.5 355.5 L257.5 355.5 L258.5 356.5 L259.5 355.5 L262.5 355.5 L263.5 356.5 L264.5 355.5 L277.5 355.5 L278.5 354.5 L279.5 355.5 L290.5 355.5 L291.5 356.5 L292.5 355.5 L292.5 355.5 L293.5 353.5 L294.5 355.5 L294.5 355.5 L295.5 356.5 L296.5 355.5 L306.5 355.5 L307.5 356.5 L308.5 355.5 L312.5 355.5 L313.5 356.5 L314.5 355.5 L318.5 355.5 L319.5 354.5 L320.5 355.5 L320.5 355.5 L321.5 357.5 L322.5 355.5 L322.5 355.5 L323.5 356.5 L324.5 355.5 L331.5 355.5 L332.5 356.5 L333.5 355.5 L335.5 355.5 L336.5 356.5 L337.5 355.5 L346.5 355.5 L347.5 356.5 L348.5 355.5 L352.5 355.5 L353.5 354.5 L354.5 355.5 L359.5 355.5 L360.5 354.5 L361.5 355.5 L361.5 355.5 L362.5 354.5 L363.5 355.5 L365.5 355.5 L366.5 354.5 L367.5 355.5 L371.5 355.5 L372.5 354.5 L373.5 355.5 L395.5 355.5 L396.5 356.5 L397.5 355.5 L397.5 355.5 L398.5 357.5 L399.5 355.5 L407.5 355.5 L408.5 357.5 L409.5 355.5 L409.5 355.5 L410.5 356.5 L411.5 355.5 L411.5 355.5 L412.5 354.5 L413.5 355.5 L450.5 355.5 L451.5 354.5 L452.5 355.5 L457.5 355.5 L458.5 354.5 L459.5 355.5 L463.5 355.5 L463.5 355.5 L463.5 194.5 L465.5 189.5 L468.5 189.5 L469.5 190.5 L470.5 189.5 L470.5 189.5 L471.5 187.5 L472.5 189.5 L486.5 189.5 L487.5 188.5 L488.5 189.5 L502.5 189.5 L503.5 190.5 L504.5 189.5 L504.5 189.5 L505.5 187.5 L506.5 189.5 L510.5 189.5 L511.5 191.5 L512.5 189.5 L531.5 189.5 L532.5 188.5 L533.5 189.5 L547.5 189.5 L548.5 190.5 L549.5 189.5 L555.5 189.5 L556.5 187.5 L557.5 189.5 L568.5 189.5 L569.5 188.5 L570.5 189.5 L572.5 189.5 L573.5 190.5 L574.5 189.5 L592.5 189.5 L593.5 190.5 L594.5 189.5 L597.5 189.5 L598.5 190.5 L599.5 189.5 L599.5 189.5 L600.5 191.5 L601.5 189.5 L601.5 189.5 L602.5 188.5 L603.5 189.5 L603.5 189.5 L604.5 190.5 L605.5 189.5 L605.5 189.5 L606.5 191.5 L607.5 189.5 L620.5 189.5 L621.5 190.5 L622.5 189.5 L629.5 189.5 L630.5 190.5 L631.5 189.5 L635.5 189.5 L636.5 190.5 L637.5 189.5 L648.5 189.5 L649.5 188.5 L650.5 189.5 L655.5 189.5 L656.5 188.5 L657.5 189.5 L657.5 189.5 L658.5 187.5 L659.5 189.5 L665.5 189.5 L666.5 190.5 L667.5 189.5 L667.5 189.5 L668.5 190.5 L669.5 189.5 L669.5 189.5 L670.5 188.5 L671.5 189.5 L682.5 189.5 L683.5 190.5 L684.5 189.5 L696.5 189.5 L697.5 188.5 L698.5 189.5 L698.5 189.5 L699.5 188.5 L700.5 189.5 L700.5 189.5 L701.5 188.5 L702.5 189.5 L702.5 189.5 L703.5 190.5 L704.5 189.5 L704.5 189.5 L705.5 191.5 L706.5 189.5 L726.5 189.5 L727.5 188.5 L728.5 189.5 L753.5 189.5 L754.5 188.5 L755.5 189.5 L757.5 189.5 L757.5 189.5 L757.5 355.5 L757.5 355.5 L758.5 354.5 L759.5 355.5 L786.5 355.5 L787.5 356.5 L788.5 355.5 L792.5 355.5 L793.5 354.5 L794.5 355.5 L794.5 355.5 L795.5 354.5 L796.5 355.5 L796.5 355.5 L797.5 354.5 L798.5 355.5 L798.5 355.5 L799.5 354.5 L800.5 355.5 L801.5 355.5 L801.5 355.5 L801.5 189.5 L806.5 189.5" fill="none" stroke="#ff00ff" stroke-width="1"/><path d="M22.5 419.5 L22.5 419.5 L23.5 417.5 L24.5 419.5 L27.5 419.5 L28.5 418.5 L29.5 419.5 L35.5 419.5 L36.5 417.5 L37.5 419.5 L37.5 419.5 L38.5 418.5 L39.5 419.5 L42.5 419.5 L43.5 417.5 L44.5 419.5 L46.5 419.5 L47.5 420.5 L48.5 419.5 L48.5 419.5 L49.5 420.5 L50.5 419.5 L50.5 419.5 L51.5 420.5 L52.5 419.5 L63.5 419.5 L64.5 418.5 L65.5 419.5 L78.5 419.5 L79.5 418.5 L80.5 419.5 L80.5 419.5 L81.5 417.5 L82.5 419.5 L82.5 419.5 L83.5 420.5 L84.5 419.5 L91.5 419.5 L92.5 418.5 L93.5 419.5 L93.5 419.5 L94.5 418.5 L95.5 419.5 L95.5 419.5 L96.5 418.5 L97.5 419.5 L105.5 419.5 L106.5 418.5 L107.5 419.5 L107.5 419.5 L108.5 418.5 L109.5 419.5 L112.5 419.5 L113.5 420.5 L114.5 419.5 L116.5 419.5 L117.5 418.5 L118.5 419.5 L118.5 419.5 L119.5 418.5 L120.5 419.5 L120.5 419.5 L121.5 418.5 L122.5 419.5 L122.5 419.5 L123.5 420.5 L124.5 419.5 L124.5 419.5 L125.5 420.5 L126.5 419.5 L126.5 419.5 L127.5 420.5 L128.5 419.5 L132.5 419.5 L133.5 420.5 L134.5 419.5 L138.5 419.5 L139.5 418.5 L140.5 419.5 L146.5 419.5 L147.5 418.5 L148.5 419.5 L150.5 419.5 L151.5 418.5 L152.5 419.5 L152.5 419.5 L153.5 418.5 L154.5 419.5 L157.5 419.5 L158.5 418.5 L159.5 419.5 L159.5 419.5 L160.5 418.5 L161.5 419.5 L160.5 419.5 L160.5 419.5 L166.5 417.5 L172.5 414.5 L176.5 410.5 L179.5 408.5 L180.5 409.5 L181.5 421.5 L183.5 417.5 L183.5 417.5 L184.5 416.5 L185.5 417.5 L189.5 417.5 L190.5 418.5 L191.5 417.5 L191.5 417.5 L192.5 419.5 L193.5 417.5 L193.5 417.5 L194.5 418.5 L195.5 417.5 L199.5 417.5 L200.5 416.5 L201.5 417.5 L211.5 417.5 L212.5 418.5 L213.5 417.5 L223.5 417.5 L224.5 418.5 L225.5 417.5 L225.5 417.5 L226.5 418.5 L227.5 417.5 L237.5 417.5 L238.5 416.5 L239.5 417.5 L250.5 417.5 L251.5 416.5 L252.5 417.5 L256.5 417.5 L257.5 418.5 L258.5 417.5 L267.5 417.5 L268.5 416.5 L269.5 417.5 L269.5 417.5 L270.5 415.5 L271.5 417.5 L271.5 417.5 L272.5 418.5 L273.5 417.5 L277.5 417.5 L278.5 416.5 L279.5 417.5 L279.5 417.5 L280.5 416.5 L281.5 417.5 L284.5 417.5 L285.5 416.5 L286.5 417.5 L286.5 417.5 L287.5 416.5 L288.5 417.5 L292.5 417.5 L293.5 418.5 L294.5 417.5 L294.5 417.5 L295.5 416.5 L296.5 417.5 L296.5 417.5 L297.5 416.5 L298.5 417.5 L298.5 417.5 L299.5 418.5 L300.5 417.5 L303.5 417.5 L304.5 418.5 L305.5 417.5 L308.5 417.5 L309.5 418.5 L310.5 417.5 L310.5 417.5 L311.5 418.5 L312.5 417.5 L312.5 417.5 L313.5 419.5 L314.5 417.5 L330.5 417.5 L331.5 416.5 L332.5 417.5 L343.5 417.5 L344.5 416.5 L345.5 417.5 L351.5 417.5 L352.5 416.5 L353.5 417.5 L361.5 417.5 L362.5 416.5 L363.5 417.5 L366.5 417.5 L367.5 416.5 L368.5 417.5 L368.5 417.5 L369.5 416.5 L370.5 417.5 L372.5 417.5 L373.5 418.5 L374.5 417.5 L378.5 417.5 L379.5 418.5 L380.5 417.5 L380.5 417.5 L381.5 416.5 L382.5 417.5 L382.5 417.5 L383.5 415.5 L384.5 417.5 L384.5 417.5 L385.5 418.5 L386.5 417.5 L386.5 417.5 L387.5 418.5 L388.5 417.5 L390.5 417.5 L391.5 418.5 L392.5 417.5 L392.5 417.5 L393.5 418.5 L394.5 417.5 L400.5 417.5 L401.5 418.5 L402.5 417.5 L405.5 417.5 L406.5 418.5 L407.5 417.5 L417.5 417.5 L418.5 416.5 L419.5 417.5 L419.5 417.5 L420.5 418.5 L421.5 417.5 L425.5 417.5 L426.5 418.5 L427.5 417.5 L427.5 417.5 L428.5 419.5 L429.5 417.5 L429.5 417.5 L430.5 418.5 L431.5 417.5 L439.5 417.5 L440.5 416.5 L441.5 417.5 L447.5 417.5 L448.5 418.5 L449.5 417.5 L449.5 417.5 L450.5 416.5 L451.5 417.5 L451.5 417.5 L452.5 416.5 L453.5 417.5 L458.5 417.5 L459.5 416.5 L460.5 158.5 L462.5 156.5 L466.5 155.5 L472.5 153.5 L475.5 152.5 L477.5 152.5 L478.5 153.5 L478.5 423.5 L480.5 418.5 L487.5 417.5 L488.5 416.5 L489.5 417.5 L489.5 417.5 L490.5 416.5 L491.5 417.5 L499.5 417.5 L500.5 416.5 L501.5 417.5 L512.5 417.5 L513.5 418.5 L514.5 417.5 L514.5 417.5 L515.5 416.5 L516.5 417.5 L516.5 417.5 L517.5 416.5 L518.5 417.5 L522.5 417.5 L523.5 418.5 L524.5 417.5 L524.5 417.5 L525.5 416.5 L526.5 417.5 L526.5 417.5 L527.5 416.5 L528.5 417.5 L528.5 417.5 L529.5 418.5 L530.5 417.5 L537.5 417.5 L538.5 416.5 L539.5 417.5 L539.5 417.5 L540.5 416.5 L541.5 417.5 L545.5 417.5 L546.5 418.5 L547.5 417.5 L554.5 417.5 L555.5 416.5 L556.5 417.5 L556.5 417.5 L557.5 418.5 L558.5 417.5 L558.5 417.5 L559.5 418.5 L560.5 417.5 L563.5 417.5 L564.5 418.5 L565.5 417.5 L575.5 417.5 L576.5 416.5 L577.5 417.5 L589.5 417.5 L590.5 418.5 L591.5 417.5 L590.5 417.5 L590.5 417.5 L592.5 418.5 L594.5 418.5 L595.5 417.5 L596.5 418.5 L600.5 418.5 L601.5 419.5 L602.5 418.5 L602.5 418.5 L603.5 419.5 L604.5 418.5 L604.5 418.5 L605.5 417.5 L606.5 418.5 L606.5 418.5 L607.5 419.5 L608.5 418.5 L608.5 418.5 L609.5 419.5 L610.5 418.5 L610.5 418.5 L611.5 419.5 L612.5 418.5 L612.5 418.5 L613.5 419.5 L614.5 418.5 L614.5 418.5 L615.5 419.5 L616.5 418.5 L621.5 418.5 L622.5 416.5 L623.5 418.5 L626.5 418.5 L627.5 419.5 L628.5 418.5 L630.5 418.5 L631.5 419.5 L632.5 418.5 L632.5 418.5 L633.5 419.5 L634.5 418.5 L634.5 418.5 L635.5 417.5 L636.5 418.5 L638.5 418.5 L639.5 417.5 L640.5 418.5 L645.5 418.5 L646.5 419.5 L647.5 418.5 L653.5 418.5 L654.5 417.5 L655.5 418.5 L658.5 418.5 L659.5 416.5 L660.5 418.5 L660.5 418.5 L661.5 419.5 L662.5 418.5 L668.5 418.5 L669.5 417.5 L670.5 418.5 L670.5 418.5 L671.5 419.5 L672.5 418.5 L678.5 418.5 L679.5 417.5 L680.5 418.5 L680.5 418.5 L681.5 417.5 L682.5 418.5 L685.5 418.5 L686.5 417.5 L687.5 418.5 L687.5 418.5 L688.5 420.5 L689.5 418.5 L689.5 418.5 L690.5 417.5 L691.5 418.5 L690.5 418.5 L690.5 418.5 L692.5 419.5 L700.5 419.5 L701.5 420.5 L702.5 419.5 L702.5 419.5 L703.5 420.5 L704.5 419.5 L704.5 419.5 L705.5 418.5 L706.5 419.5 L715.5 419.5 L716.5 420.5 L717.5 419.5 L717.5 419.5 L718.5 420.5 L719.5 419.5 L726.5 419.5 L727.5 420.5 L728.5 419.5 L728.5 419.5 L729.5 418.5 L730.5 419.5 L730.5 419.5 L731.5 418.5 L732.5 419.5 L732.5 419.5 L733.5 420.5 L734.5 419.5 L734.5 419.5 L735.5 418.5 L736.5 419.5 L736.5 419.5 L737.5 417.5 L738.5 419.5 L741.5 419.5 L742.5 418.5 L743.5 419.5 L743.5 419.5 L744.5 420.5 L745.5 419.5 L745.5 419.5 L746.5 418.5 L747.5 419.5 L750.5 419.5 L750.5 419.5 L758.5 415.5 L765.5 411.5 L770.5 408.5 L772.5 406.5 L774.5 407.5 L775.5 422.5 L777.5 418.5 L777.5 418.5 L778.5 417.5 L779.5 418.5 L779.5 418.5 L780.5 419.5 L781.5 418.5 L783.5 418.5 L784.5 419.5 L785.5 418.5 L785.5 418.5 L786.5 419.5 L787.5 418.5 L796.5 418.5 L797.5 419.5 L798.5 418.5 L798.5 418.5 L799.5 419.5 L800.5 418.5 L806.5 418.5" fill="none" stroke="#00ff00" stroke-width="1"/></g><path d="M2 316 H14 L19.5 321.5 L14 327 H2 Z" fill="#ffff00" stroke="#1a1a40" stroke-width="0.6"/><text x="9.5" y="326" font-family="Liberation Sans" font-weight="bold" font-size="11.5" text-anchor="middle" fill="#000" stroke="#000" stroke-width="0.7">1</text><path d="M2 356 H14 L19.5 361.5 L14 367 H2 Z" fill="#ff00ff" stroke="#1a1a40" stroke-width="0.6"/><text x="9.5" y="366" font-family="Liberation Sans" font-weight="bold" font-size="11.5" text-anchor="middle" fill="#000" stroke="#000" stroke-width="0.7">3</text><path d="M2 381 H14 L19.5 386.5 L14 392 H2 Z" fill="#00ffff" stroke="#1a1a40" stroke-width="0.6"/><text x="9.5" y="391" font-family="Liberation Sans" font-weight="bold" font-size="11.5" text-anchor="middle" fill="#000" stroke="#000" stroke-width="0.7">2</text><path d="M2 416 H14 L19.5 421.5 L14 427 H2 Z" fill="#00ff00" stroke="#1a1a40" stroke-width="0.6"/><text x="9.5" y="426" font-family="Liberation Sans" font-weight="bold" font-size="11.5" text-anchor="middle" fill="#000" stroke="#000" stroke-width="0.7">4</text><path d="M810 421.5 L815.5 416 H827 V427 H815.5 Z" fill="#00ff00" stroke="#1a1a40" stroke-width="0.6"/><text x="821" y="426.5" font-family="Liberation Sans" font-size="11" text-anchor="middle" fill="#000">T</text><path d="M314 109 H325 V118.5 L319.5 124 L314 118.5 Z" fill="#ff8800" stroke="#1a1a40" stroke-width="0.6"/><text x="319.5" y="119" font-family="Liberation Sans" font-size="10" text-anchor="middle" fill="#000">T</text></svg>
<!--OVL-->
<div class="a" style="left:37px;top:414px;font-size:17px;line-height:17px;color:#fff;white-space:nowrap;-webkit-text-stroke:0.3px #fff">yellow trace = crank</div>
<div class="a" style="left:37px;top:437px;font-size:17px;line-height:17px;color:#fff;white-space:nowrap;-webkit-text-stroke:0.3px #fff">blue trace = intake cam</div>
<div class="a" style="left:37px;top:460px;font-size:17px;line-height:17px;color:#fff;white-space:nowrap;-webkit-text-stroke:0.3px #fff">pink trace = exhaust cam</div>
<div class="a" style="left:37px;top:483px;font-size:17px;line-height:17px;color:#fff;white-space:nowrap;-webkit-text-stroke:0.3px #fff">green trace = ignition</div>
<div class="a" style="left:37px;top:506px;font-size:17px;line-height:17px;color:#fff;white-space:nowrap;-webkit-text-stroke:0.3px #fff">firing No. 1 cylinder</div>
<div class="a" style="left:320px;top:444px;font-size:17px;line-height:17px;color:#fff;white-space:nowrap;-webkit-text-stroke:0.3px #fff">engine at idle</div>
<svg class="a" style="left:0;top:0" width="999" height="110">
<path d="M352.5 88.5 H349.5 V102.5 H352.5 M475.5 88.5 H478.5 V102.5 H475.5" fill="none" stroke="#00e0ff" stroke-width="1"/>
<path d="M350 95.5 L350 93.5 L355 97.5 L360 93.5 L365 97.5 L370 93.5 L375 97.5 L380 93.5 L385 97.5 L390 93.5 L395 97.5 L400 93.5 L405 97.5 L410 93.5 L415 97.5 L420 93.5 L425 97.5 L430 93.5 L435 97.5 L440 93.5 L445 97.5 L450 93.5 L455 97.5 L460 93.5 L465 97.5 L470 93.5 L475 97.5 L478 95.5" fill="none" stroke="#00ff00" stroke-width="1"/>
<text x="398.5" y="89" font-family="Liberation Sans" font-size="9" fill="#ff8000" text-anchor="middle">T</text>
<path d="M730 100.5 H735.5 V84.5 H740.5" fill="none" stroke="#00ff00" stroke-width="1"/>
<path d="M732 93.5 L735.5 89.5 L739 93.5 Z" fill="#00ff00"/>
</svg>
<!--/OVL-->
</body></html>
